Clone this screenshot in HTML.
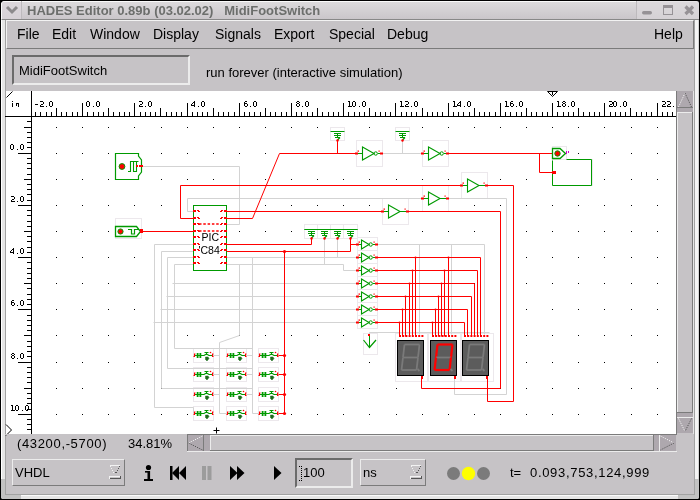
<!DOCTYPE html>
<html><head><meta charset="utf-8">
<style>
*{margin:0;padding:0;box-sizing:border-box}
html,body{width:700px;height:500px;overflow:hidden;background:#000;font-family:"Liberation Sans",sans-serif;-webkit-font-smoothing:antialiased}
#win{will-change:transform}
.a{position:absolute}
#win{position:absolute;left:0;top:0;width:700px;height:500px;background:#000;border-radius:5px 5px 5px 5px;overflow:hidden}
#frame{position:absolute;left:1px;top:1px;width:698px;height:498px;background:#e6e6e6;border-left:1px solid #fff;border-right:1px solid #d4d4d4;border-radius:4px 4px 4px 4px}
#content{position:absolute;left:5px;top:19px;width:690px;height:476px;background:#c6c3c6;border:1px solid #a2a2a2}
#title{position:absolute;left:1px;top:1px;width:698px;height:19px;background:linear-gradient(#dcdadc,#cac6ca);border-radius:4px 4px 0 0;border-bottom:1px solid #888;border-top:1px solid #fafafa;border-left:1px solid #fafafa}
#title .t{position:absolute;left:25px;top:1px;font-weight:bold;font-size:13px;color:#6c6e6c;white-space:pre}
#menubar{position:absolute;left:6px;top:20px;width:688px;height:29px;border-top:1px solid #f2f2f2;border-left:1px solid #f2f2f2;border-bottom:1px solid #7b7b7b;border-right:1px solid #7b7b7b;background:#c6c3c6}
.mi{position:absolute;top:5px;font-size:14px;color:#000}
#canvas{position:absolute;left:6px;top:91px;width:670px;height:343px;background:#fff;overflow:hidden}
.txt{font-size:13px;color:#000;position:absolute;white-space:pre}
svg{position:absolute;left:0;top:0}
svg text{font-family:"Liberation Sans",sans-serif}
</style></head><body>
<div id="win">
 <div id="frame"></div>
 <div class="a" style="left:695px;top:19px;width:3px;height:460px;background:#f4f4f4"></div>
 <div class="a" style="left:21px;top:495px;width:657px;height:1px;background:#fafafa"></div>
 <div class="a" style="left:1px;top:479px;width:4px;height:20px;background:#c2c2c2"></div>
 <div class="a" style="left:1px;top:495px;width:20px;height:4px;background:#c2c2c2;border-radius:0 0 0 4px"></div>
 <div class="a" style="left:695px;top:479px;width:4px;height:20px;background:#c2c2c2"></div>
 <div class="a" style="left:678px;top:495px;width:21px;height:4px;background:#c2c2c2;border-radius:0 0 4px 0"></div>
 <div id="content"></div>
 <div id="title"><div class="t">HADES Editor 0.89b (03.02.02)   MidiFootSwitch</div></div>
 <div id="menubar">
  <span class="mi" style="left:10px">File</span>
  <span class="mi" style="left:45px">Edit</span>
  <span class="mi" style="left:83px">Window</span>
  <span class="mi" style="left:146px">Display</span>
  <span class="mi" style="left:208px">Signals</span>
  <span class="mi" style="left:267px">Export</span>
  <span class="mi" style="left:322px">Special</span>
  <span class="mi" style="left:380px">Debug</span>
  <span class="mi" style="left:647px">Help</span>
 </div>
 <div class="a" style="left:12px;top:55px;width:178px;height:30px;border:2px solid;border-color:#6b6b6b #ececec #ececec #6b6b6b"></div>
 <div class="txt" style="left:19px;top:63px">MidiFootSwitch</div>
 <div class="txt" style="left:206px;top:65px">run forever (interactive simulation)</div>
 <div id="canvas"></div>
 <svg width="700" height="500" viewBox="0 0 700 500">
<rect x="5" y="116" width="672" height="1" fill="#000"/>
<rect x="31" y="91" width="1" height="343" fill="#000"/>
<path d="M6.5 97.5 L12.5 91.5" stroke="#000" stroke-width="1" fill="none"/>
<rect x="12" y="101" width="1" height="1" fill="#000"/>
<rect x="12" y="103" width="1" height="4" fill="#000"/>
<rect x="16" y="103" width="3" height="1" fill="#000"/>
<rect x="16" y="104" width="1" height="2" fill="#000"/>
<rect x="18" y="104" width="1" height="3" fill="#000"/>
<path d="M87 101h1v1h-1zM88 101h1v1h-1zM86 102h1v1h-1zM89 102h1v1h-1zM86 103h1v1h-1zM89 103h1v1h-1zM86 104h1v1h-1zM89 104h1v1h-1zM86 105h1v1h-1zM89 105h1v1h-1zM87 106h1v1h-1zM88 106h1v1h-1zM93 106h1v1h-1zM97 101h1v1h-1zM98 101h1v1h-1zM96 102h1v1h-1zM99 102h1v1h-1zM96 103h1v1h-1zM99 103h1v1h-1zM96 104h1v1h-1zM99 104h1v1h-1zM96 105h1v1h-1zM99 105h1v1h-1zM97 106h1v1h-1zM98 106h1v1h-1z" fill="#000"/>
<path d="M139 101h1v1h-1zM140 101h1v1h-1zM141 101h1v1h-1zM142 102h1v1h-1zM142 103h1v1h-1zM140 104h1v1h-1zM141 104h1v1h-1zM139 105h1v1h-1zM139 106h1v1h-1zM140 106h1v1h-1zM141 106h1v1h-1zM142 106h1v1h-1zM145 106h1v1h-1zM149 101h1v1h-1zM150 101h1v1h-1zM148 102h1v1h-1zM151 102h1v1h-1zM148 103h1v1h-1zM151 103h1v1h-1zM148 104h1v1h-1zM151 104h1v1h-1zM148 105h1v1h-1zM151 105h1v1h-1zM149 106h1v1h-1zM150 106h1v1h-1z" fill="#000"/>
<path d="M194 101h1v1h-1zM193 102h1v1h-1zM194 102h1v1h-1zM192 103h1v1h-1zM194 103h1v1h-1zM191 104h1v1h-1zM194 104h1v1h-1zM191 105h1v1h-1zM192 105h1v1h-1zM193 105h1v1h-1zM194 105h1v1h-1zM194 106h1v1h-1zM198 106h1v1h-1zM202 101h1v1h-1zM203 101h1v1h-1zM201 102h1v1h-1zM204 102h1v1h-1zM201 103h1v1h-1zM204 103h1v1h-1zM201 104h1v1h-1zM204 104h1v1h-1zM201 105h1v1h-1zM204 105h1v1h-1zM202 106h1v1h-1zM203 106h1v1h-1z" fill="#000"/>
<path d="M245 101h1v1h-1zM246 101h1v1h-1zM244 102h1v1h-1zM244 103h1v1h-1zM245 103h1v1h-1zM246 103h1v1h-1zM244 104h1v1h-1zM247 104h1v1h-1zM244 105h1v1h-1zM247 105h1v1h-1zM245 106h1v1h-1zM246 106h1v1h-1zM250 106h1v1h-1zM254 101h1v1h-1zM255 101h1v1h-1zM253 102h1v1h-1zM256 102h1v1h-1zM253 103h1v1h-1zM256 103h1v1h-1zM253 104h1v1h-1zM256 104h1v1h-1zM253 105h1v1h-1zM256 105h1v1h-1zM254 106h1v1h-1zM255 106h1v1h-1z" fill="#000"/>
<path d="M297 101h1v1h-1zM298 101h1v1h-1zM296 102h1v1h-1zM299 102h1v1h-1zM297 103h1v1h-1zM298 103h1v1h-1zM296 104h1v1h-1zM299 104h1v1h-1zM296 105h1v1h-1zM299 105h1v1h-1zM297 106h1v1h-1zM298 106h1v1h-1zM302 106h1v1h-1zM306 101h1v1h-1zM307 101h1v1h-1zM305 102h1v1h-1zM308 102h1v1h-1zM305 103h1v1h-1zM308 103h1v1h-1zM305 104h1v1h-1zM308 104h1v1h-1zM305 105h1v1h-1zM308 105h1v1h-1zM306 106h1v1h-1zM307 106h1v1h-1z" fill="#000"/>
<path d="M348 101h1v1h-1zM349 101h1v1h-1zM349 102h1v1h-1zM349 103h1v1h-1zM349 104h1v1h-1zM349 105h1v1h-1zM348 106h1v1h-1zM349 106h1v1h-1zM350 106h1v1h-1zM351 106h1v1h-1zM353 101h1v1h-1zM354 101h1v1h-1zM352 102h1v1h-1zM355 102h1v1h-1zM352 103h1v1h-1zM355 103h1v1h-1zM352 104h1v1h-1zM355 104h1v1h-1zM352 105h1v1h-1zM355 105h1v1h-1zM353 106h1v1h-1zM354 106h1v1h-1zM359 106h1v1h-1zM363 101h1v1h-1zM364 101h1v1h-1zM362 102h1v1h-1zM365 102h1v1h-1zM362 103h1v1h-1zM365 103h1v1h-1zM362 104h1v1h-1zM365 104h1v1h-1zM362 105h1v1h-1zM365 105h1v1h-1zM363 106h1v1h-1zM364 106h1v1h-1z" fill="#000"/>
<path d="M400 101h1v1h-1zM401 101h1v1h-1zM401 102h1v1h-1zM401 103h1v1h-1zM401 104h1v1h-1zM401 105h1v1h-1zM400 106h1v1h-1zM401 106h1v1h-1zM402 106h1v1h-1zM403 106h1v1h-1zM405 101h1v1h-1zM406 101h1v1h-1zM407 101h1v1h-1zM408 102h1v1h-1zM408 103h1v1h-1zM406 104h1v1h-1zM407 104h1v1h-1zM405 105h1v1h-1zM405 106h1v1h-1zM406 106h1v1h-1zM407 106h1v1h-1zM408 106h1v1h-1zM411 106h1v1h-1zM415 101h1v1h-1zM416 101h1v1h-1zM414 102h1v1h-1zM417 102h1v1h-1zM414 103h1v1h-1zM417 103h1v1h-1zM414 104h1v1h-1zM417 104h1v1h-1zM414 105h1v1h-1zM417 105h1v1h-1zM415 106h1v1h-1zM416 106h1v1h-1z" fill="#000"/>
<path d="M453 101h1v1h-1zM454 101h1v1h-1zM454 102h1v1h-1zM454 103h1v1h-1zM454 104h1v1h-1zM454 105h1v1h-1zM453 106h1v1h-1zM454 106h1v1h-1zM455 106h1v1h-1zM456 106h1v1h-1zM460 101h1v1h-1zM459 102h1v1h-1zM460 102h1v1h-1zM458 103h1v1h-1zM460 103h1v1h-1zM457 104h1v1h-1zM460 104h1v1h-1zM457 105h1v1h-1zM458 105h1v1h-1zM459 105h1v1h-1zM460 105h1v1h-1zM460 106h1v1h-1zM464 106h1v1h-1zM468 101h1v1h-1zM469 101h1v1h-1zM467 102h1v1h-1zM470 102h1v1h-1zM467 103h1v1h-1zM470 103h1v1h-1zM467 104h1v1h-1zM470 104h1v1h-1zM467 105h1v1h-1zM470 105h1v1h-1zM468 106h1v1h-1zM469 106h1v1h-1z" fill="#000"/>
<path d="M505 101h1v1h-1zM506 101h1v1h-1zM506 102h1v1h-1zM506 103h1v1h-1zM506 104h1v1h-1zM506 105h1v1h-1zM505 106h1v1h-1zM506 106h1v1h-1zM507 106h1v1h-1zM508 106h1v1h-1zM511 101h1v1h-1zM512 101h1v1h-1zM510 102h1v1h-1zM510 103h1v1h-1zM511 103h1v1h-1zM512 103h1v1h-1zM510 104h1v1h-1zM513 104h1v1h-1zM510 105h1v1h-1zM513 105h1v1h-1zM511 106h1v1h-1zM512 106h1v1h-1zM516 106h1v1h-1zM520 101h1v1h-1zM521 101h1v1h-1zM519 102h1v1h-1zM522 102h1v1h-1zM519 103h1v1h-1zM522 103h1v1h-1zM519 104h1v1h-1zM522 104h1v1h-1zM519 105h1v1h-1zM522 105h1v1h-1zM520 106h1v1h-1zM521 106h1v1h-1z" fill="#000"/>
<path d="M557 101h1v1h-1zM558 101h1v1h-1zM558 102h1v1h-1zM558 103h1v1h-1zM558 104h1v1h-1zM558 105h1v1h-1zM557 106h1v1h-1zM558 106h1v1h-1zM559 106h1v1h-1zM560 106h1v1h-1zM563 101h1v1h-1zM564 101h1v1h-1zM562 102h1v1h-1zM565 102h1v1h-1zM563 103h1v1h-1zM564 103h1v1h-1zM562 104h1v1h-1zM565 104h1v1h-1zM562 105h1v1h-1zM565 105h1v1h-1zM563 106h1v1h-1zM564 106h1v1h-1zM568 106h1v1h-1zM572 101h1v1h-1zM573 101h1v1h-1zM571 102h1v1h-1zM574 102h1v1h-1zM571 103h1v1h-1zM574 103h1v1h-1zM571 104h1v1h-1zM574 104h1v1h-1zM571 105h1v1h-1zM574 105h1v1h-1zM572 106h1v1h-1zM573 106h1v1h-1z" fill="#000"/>
<path d="M609 101h1v1h-1zM610 101h1v1h-1zM611 101h1v1h-1zM612 102h1v1h-1zM612 103h1v1h-1zM610 104h1v1h-1zM611 104h1v1h-1zM609 105h1v1h-1zM609 106h1v1h-1zM610 106h1v1h-1zM611 106h1v1h-1zM612 106h1v1h-1zM614 101h1v1h-1zM615 101h1v1h-1zM613 102h1v1h-1zM616 102h1v1h-1zM613 103h1v1h-1zM616 103h1v1h-1zM613 104h1v1h-1zM616 104h1v1h-1zM613 105h1v1h-1zM616 105h1v1h-1zM614 106h1v1h-1zM615 106h1v1h-1zM620 106h1v1h-1zM624 101h1v1h-1zM625 101h1v1h-1zM623 102h1v1h-1zM626 102h1v1h-1zM623 103h1v1h-1zM626 103h1v1h-1zM623 104h1v1h-1zM626 104h1v1h-1zM623 105h1v1h-1zM626 105h1v1h-1zM624 106h1v1h-1zM625 106h1v1h-1z" fill="#000"/>
<path d="M662 101h1v1h-1zM663 101h1v1h-1zM664 101h1v1h-1zM665 102h1v1h-1zM665 103h1v1h-1zM663 104h1v1h-1zM664 104h1v1h-1zM662 105h1v1h-1zM662 106h1v1h-1zM663 106h1v1h-1zM664 106h1v1h-1zM665 106h1v1h-1zM667 101h1v1h-1zM668 101h1v1h-1zM669 101h1v1h-1zM670 102h1v1h-1zM670 103h1v1h-1zM668 104h1v1h-1zM669 104h1v1h-1zM667 105h1v1h-1zM667 106h1v1h-1zM668 106h1v1h-1zM669 106h1v1h-1zM670 106h1v1h-1zM673 106h1v1h-1zM677 101h1v1h-1zM678 101h1v1h-1zM676 102h1v1h-1zM679 102h1v1h-1zM676 103h1v1h-1zM679 103h1v1h-1zM676 104h1v1h-1zM679 104h1v1h-1zM676 105h1v1h-1zM679 105h1v1h-1zM677 106h1v1h-1zM678 106h1v1h-1z" fill="#000"/>
<path d="M35 104h1v1h-1zM36 104h1v1h-1zM37 104h1v1h-1zM40 101h1v1h-1zM41 101h1v1h-1zM42 101h1v1h-1zM43 102h1v1h-1zM43 103h1v1h-1zM41 104h1v1h-1zM42 104h1v1h-1zM40 105h1v1h-1zM40 106h1v1h-1zM41 106h1v1h-1zM42 106h1v1h-1zM43 106h1v1h-1zM46 106h1v1h-1zM50 101h1v1h-1zM51 101h1v1h-1zM49 102h1v1h-1zM52 102h1v1h-1zM49 103h1v1h-1zM52 103h1v1h-1zM49 104h1v1h-1zM52 104h1v1h-1zM49 105h1v1h-1zM52 105h1v1h-1zM50 106h1v1h-1zM51 106h1v1h-1z" fill="#000"/>
<path d="M11 144h1v1h-1zM12 144h1v1h-1zM10 145h1v1h-1zM13 145h1v1h-1zM10 146h1v1h-1zM13 146h1v1h-1zM10 147h1v1h-1zM13 147h1v1h-1zM10 148h1v1h-1zM13 148h1v1h-1zM11 149h1v1h-1zM12 149h1v1h-1zM17 149h1v1h-1zM21 144h1v1h-1zM22 144h1v1h-1zM20 145h1v1h-1zM23 145h1v1h-1zM20 146h1v1h-1zM23 146h1v1h-1zM20 147h1v1h-1zM23 147h1v1h-1zM20 148h1v1h-1zM23 148h1v1h-1zM21 149h1v1h-1zM22 149h1v1h-1z" fill="#000"/>
<path d="M11 196h1v1h-1zM12 196h1v1h-1zM13 196h1v1h-1zM14 197h1v1h-1zM14 198h1v1h-1zM12 199h1v1h-1zM13 199h1v1h-1zM11 200h1v1h-1zM11 201h1v1h-1zM12 201h1v1h-1zM13 201h1v1h-1zM14 201h1v1h-1zM17 201h1v1h-1zM21 196h1v1h-1zM22 196h1v1h-1zM20 197h1v1h-1zM23 197h1v1h-1zM20 198h1v1h-1zM23 198h1v1h-1zM20 199h1v1h-1zM23 199h1v1h-1zM20 200h1v1h-1zM23 200h1v1h-1zM21 201h1v1h-1zM22 201h1v1h-1z" fill="#000"/>
<path d="M13 248h1v1h-1zM12 249h1v1h-1zM13 249h1v1h-1zM11 250h1v1h-1zM13 250h1v1h-1zM10 251h1v1h-1zM13 251h1v1h-1zM10 252h1v1h-1zM11 252h1v1h-1zM12 252h1v1h-1zM13 252h1v1h-1zM13 253h1v1h-1zM17 253h1v1h-1zM21 248h1v1h-1zM22 248h1v1h-1zM20 249h1v1h-1zM23 249h1v1h-1zM20 250h1v1h-1zM23 250h1v1h-1zM20 251h1v1h-1zM23 251h1v1h-1zM20 252h1v1h-1zM23 252h1v1h-1zM21 253h1v1h-1zM22 253h1v1h-1z" fill="#000"/>
<path d="M12 300h1v1h-1zM13 300h1v1h-1zM11 301h1v1h-1zM11 302h1v1h-1zM12 302h1v1h-1zM13 302h1v1h-1zM11 303h1v1h-1zM14 303h1v1h-1zM11 304h1v1h-1zM14 304h1v1h-1zM12 305h1v1h-1zM13 305h1v1h-1zM17 305h1v1h-1zM21 300h1v1h-1zM22 300h1v1h-1zM20 301h1v1h-1zM23 301h1v1h-1zM20 302h1v1h-1zM23 302h1v1h-1zM20 303h1v1h-1zM23 303h1v1h-1zM20 304h1v1h-1zM23 304h1v1h-1zM21 305h1v1h-1zM22 305h1v1h-1z" fill="#000"/>
<path d="M12 353h1v1h-1zM13 353h1v1h-1zM11 354h1v1h-1zM14 354h1v1h-1zM12 355h1v1h-1zM13 355h1v1h-1zM11 356h1v1h-1zM14 356h1v1h-1zM11 357h1v1h-1zM14 357h1v1h-1zM12 358h1v1h-1zM13 358h1v1h-1zM17 358h1v1h-1zM21 353h1v1h-1zM22 353h1v1h-1zM20 354h1v1h-1zM23 354h1v1h-1zM20 355h1v1h-1zM23 355h1v1h-1zM20 356h1v1h-1zM23 356h1v1h-1zM20 357h1v1h-1zM23 357h1v1h-1zM21 358h1v1h-1zM22 358h1v1h-1z" fill="#000"/>
<path d="M11 405h1v1h-1zM12 405h1v1h-1zM12 406h1v1h-1zM12 407h1v1h-1zM12 408h1v1h-1zM12 409h1v1h-1zM11 410h1v1h-1zM12 410h1v1h-1zM13 410h1v1h-1zM14 410h1v1h-1zM16 405h1v1h-1zM17 405h1v1h-1zM15 406h1v1h-1zM18 406h1v1h-1zM15 407h1v1h-1zM18 407h1v1h-1zM15 408h1v1h-1zM18 408h1v1h-1zM15 409h1v1h-1zM18 409h1v1h-1zM16 410h1v1h-1zM17 410h1v1h-1zM22 410h1v1h-1zM26 405h1v1h-1zM27 405h1v1h-1zM25 406h1v1h-1zM28 406h1v1h-1zM25 407h1v1h-1zM28 407h1v1h-1zM25 408h1v1h-1zM28 408h1v1h-1zM25 409h1v1h-1zM28 409h1v1h-1zM26 410h1v1h-1zM27 410h1v1h-1z" fill="#000"/>
<path d="M35 112h1v4h-1zM40 112h1v4h-1zM46 112h1v4h-1zM51 112h1v4h-1zM56 108h1v8h-1zM61 112h1v4h-1zM66 112h1v4h-1zM72 112h1v4h-1zM77 112h1v4h-1zM82 103h1v13h-1zM87 112h1v4h-1zM93 112h1v4h-1zM98 112h1v4h-1zM103 112h1v4h-1zM108 108h1v8h-1zM113 112h1v4h-1zM119 112h1v4h-1zM124 112h1v4h-1zM129 112h1v4h-1zM134 103h1v13h-1zM140 112h1v4h-1zM145 112h1v4h-1zM150 112h1v4h-1zM155 112h1v4h-1zM160 108h1v8h-1zM166 112h1v4h-1zM171 112h1v4h-1zM176 112h1v4h-1zM181 112h1v4h-1zM187 103h1v13h-1zM192 112h1v4h-1zM197 112h1v4h-1zM202 112h1v4h-1zM207 112h1v4h-1zM213 108h1v8h-1zM218 112h1v4h-1zM223 112h1v4h-1zM228 112h1v4h-1zM234 112h1v4h-1zM239 103h1v13h-1zM244 112h1v4h-1zM249 112h1v4h-1zM254 112h1v4h-1zM260 112h1v4h-1zM265 108h1v8h-1zM270 112h1v4h-1zM275 112h1v4h-1zM281 112h1v4h-1zM286 112h1v4h-1zM291 103h1v13h-1zM296 112h1v4h-1zM301 112h1v4h-1zM307 112h1v4h-1zM312 112h1v4h-1zM317 108h1v8h-1zM322 112h1v4h-1zM328 112h1v4h-1zM333 112h1v4h-1zM338 112h1v4h-1zM343 103h1v13h-1zM348 112h1v4h-1zM354 112h1v4h-1zM359 112h1v4h-1zM364 112h1v4h-1zM369 108h1v8h-1zM375 112h1v4h-1zM380 112h1v4h-1zM385 112h1v4h-1zM390 112h1v4h-1zM395 103h1v13h-1zM401 112h1v4h-1zM406 112h1v4h-1zM411 112h1v4h-1zM416 112h1v4h-1zM422 108h1v8h-1zM427 112h1v4h-1zM432 112h1v4h-1zM437 112h1v4h-1zM442 112h1v4h-1zM448 103h1v13h-1zM453 112h1v4h-1zM458 112h1v4h-1zM463 112h1v4h-1zM469 112h1v4h-1zM474 108h1v8h-1zM479 112h1v4h-1zM484 112h1v4h-1zM489 112h1v4h-1zM495 112h1v4h-1zM500 103h1v13h-1zM505 112h1v4h-1zM510 112h1v4h-1zM516 112h1v4h-1zM521 112h1v4h-1zM526 108h1v8h-1zM531 112h1v4h-1zM536 112h1v4h-1zM542 112h1v4h-1zM547 112h1v4h-1zM552 103h1v13h-1zM557 112h1v4h-1zM563 112h1v4h-1zM568 112h1v4h-1zM573 112h1v4h-1zM578 108h1v8h-1zM583 112h1v4h-1zM589 112h1v4h-1zM594 112h1v4h-1zM599 112h1v4h-1zM604 103h1v13h-1zM610 112h1v4h-1zM615 112h1v4h-1zM620 112h1v4h-1zM625 112h1v4h-1zM630 108h1v8h-1zM636 112h1v4h-1zM641 112h1v4h-1zM646 112h1v4h-1zM651 112h1v4h-1zM657 103h1v13h-1zM662 112h1v4h-1zM667 112h1v4h-1zM672 112h1v4h-1zM27 121h4v1h-4zM24 127h7v1h-7zM27 132h4v1h-4zM27 137h4v1h-4zM27 142h4v1h-4zM27 147h4v1h-4zM18 153h13v1h-13zM27 158h4v1h-4zM27 163h4v1h-4zM27 168h4v1h-4zM27 174h4v1h-4zM24 179h7v1h-7zM27 184h4v1h-4zM27 189h4v1h-4zM27 194h4v1h-4zM27 200h4v1h-4zM18 205h13v1h-13zM27 210h4v1h-4zM27 215h4v1h-4zM27 221h4v1h-4zM27 226h4v1h-4zM24 231h7v1h-7zM27 236h4v1h-4zM27 241h4v1h-4zM27 247h4v1h-4zM27 252h4v1h-4zM18 257h13v1h-13zM27 262h4v1h-4zM27 268h4v1h-4zM27 273h4v1h-4zM27 278h4v1h-4zM24 283h7v1h-7zM27 288h4v1h-4zM27 294h4v1h-4zM27 299h4v1h-4zM27 304h4v1h-4zM18 309h13v1h-13zM27 315h4v1h-4zM27 320h4v1h-4zM27 325h4v1h-4zM27 330h4v1h-4zM24 335h7v1h-7zM27 341h4v1h-4zM27 346h4v1h-4zM27 351h4v1h-4zM27 356h4v1h-4zM18 362h13v1h-13zM27 367h4v1h-4zM27 372h4v1h-4zM27 377h4v1h-4zM27 382h4v1h-4zM24 388h7v1h-7zM27 393h4v1h-4zM27 398h4v1h-4zM27 403h4v1h-4zM27 409h4v1h-4zM18 414h13v1h-13zM27 419h4v1h-4zM27 424h4v1h-4zM27 429h4v1h-4z" fill="#000"/>
<path d="M6 424.5 L11.5 430 L6 435.5" stroke="#000" stroke-width="1" fill="none"/>
<path d="M547.5 91.5 H557.5 L552.5 96.5 Z M552.5 91.5 V95" stroke="#000" stroke-width="1" fill="none"/>
<rect x="56" y="127" width="1" height="1" fill="#000"/>
<rect x="56" y="153" width="1" height="1" fill="#000"/>
<rect x="56" y="179" width="1" height="1" fill="#000"/>
<rect x="56" y="205" width="1" height="1" fill="#000"/>
<rect x="56" y="231" width="1" height="1" fill="#000"/>
<rect x="56" y="257" width="1" height="1" fill="#000"/>
<rect x="56" y="283" width="1" height="1" fill="#000"/>
<rect x="56" y="309" width="1" height="1" fill="#000"/>
<rect x="56" y="335" width="1" height="1" fill="#000"/>
<rect x="56" y="362" width="1" height="1" fill="#000"/>
<rect x="56" y="388" width="1" height="1" fill="#000"/>
<rect x="56" y="414" width="1" height="1" fill="#000"/>
<rect x="82" y="127" width="1" height="1" fill="#000"/>
<rect x="82" y="153" width="1" height="1" fill="#000"/>
<rect x="82" y="179" width="1" height="1" fill="#000"/>
<rect x="82" y="205" width="1" height="1" fill="#000"/>
<rect x="82" y="231" width="1" height="1" fill="#000"/>
<rect x="82" y="257" width="1" height="1" fill="#000"/>
<rect x="82" y="283" width="1" height="1" fill="#000"/>
<rect x="82" y="309" width="1" height="1" fill="#000"/>
<rect x="82" y="335" width="1" height="1" fill="#000"/>
<rect x="82" y="362" width="1" height="1" fill="#000"/>
<rect x="82" y="388" width="1" height="1" fill="#000"/>
<rect x="82" y="414" width="1" height="1" fill="#000"/>
<rect x="108" y="127" width="1" height="1" fill="#000"/>
<rect x="108" y="153" width="1" height="1" fill="#000"/>
<rect x="108" y="179" width="1" height="1" fill="#000"/>
<rect x="108" y="205" width="1" height="1" fill="#000"/>
<rect x="108" y="231" width="1" height="1" fill="#000"/>
<rect x="108" y="257" width="1" height="1" fill="#000"/>
<rect x="108" y="283" width="1" height="1" fill="#000"/>
<rect x="108" y="309" width="1" height="1" fill="#000"/>
<rect x="108" y="335" width="1" height="1" fill="#000"/>
<rect x="108" y="362" width="1" height="1" fill="#000"/>
<rect x="108" y="388" width="1" height="1" fill="#000"/>
<rect x="108" y="414" width="1" height="1" fill="#000"/>
<rect x="134" y="127" width="1" height="1" fill="#000"/>
<rect x="134" y="153" width="1" height="1" fill="#000"/>
<rect x="134" y="179" width="1" height="1" fill="#000"/>
<rect x="134" y="205" width="1" height="1" fill="#000"/>
<rect x="134" y="231" width="1" height="1" fill="#000"/>
<rect x="134" y="257" width="1" height="1" fill="#000"/>
<rect x="134" y="283" width="1" height="1" fill="#000"/>
<rect x="134" y="309" width="1" height="1" fill="#000"/>
<rect x="134" y="335" width="1" height="1" fill="#000"/>
<rect x="134" y="362" width="1" height="1" fill="#000"/>
<rect x="134" y="388" width="1" height="1" fill="#000"/>
<rect x="134" y="414" width="1" height="1" fill="#000"/>
<rect x="161" y="127" width="1" height="1" fill="#000"/>
<rect x="161" y="153" width="1" height="1" fill="#000"/>
<rect x="161" y="179" width="1" height="1" fill="#000"/>
<rect x="161" y="205" width="1" height="1" fill="#000"/>
<rect x="161" y="231" width="1" height="1" fill="#000"/>
<rect x="161" y="257" width="1" height="1" fill="#000"/>
<rect x="161" y="283" width="1" height="1" fill="#000"/>
<rect x="161" y="309" width="1" height="1" fill="#000"/>
<rect x="161" y="335" width="1" height="1" fill="#000"/>
<rect x="161" y="362" width="1" height="1" fill="#000"/>
<rect x="161" y="388" width="1" height="1" fill="#000"/>
<rect x="161" y="414" width="1" height="1" fill="#000"/>
<rect x="187" y="127" width="1" height="1" fill="#000"/>
<rect x="187" y="153" width="1" height="1" fill="#000"/>
<rect x="187" y="179" width="1" height="1" fill="#000"/>
<rect x="187" y="205" width="1" height="1" fill="#000"/>
<rect x="187" y="231" width="1" height="1" fill="#000"/>
<rect x="187" y="257" width="1" height="1" fill="#000"/>
<rect x="187" y="283" width="1" height="1" fill="#000"/>
<rect x="187" y="309" width="1" height="1" fill="#000"/>
<rect x="187" y="335" width="1" height="1" fill="#000"/>
<rect x="187" y="362" width="1" height="1" fill="#000"/>
<rect x="187" y="388" width="1" height="1" fill="#000"/>
<rect x="187" y="414" width="1" height="1" fill="#000"/>
<rect x="213" y="127" width="1" height="1" fill="#000"/>
<rect x="213" y="153" width="1" height="1" fill="#000"/>
<rect x="213" y="179" width="1" height="1" fill="#000"/>
<rect x="213" y="205" width="1" height="1" fill="#000"/>
<rect x="213" y="231" width="1" height="1" fill="#000"/>
<rect x="213" y="257" width="1" height="1" fill="#000"/>
<rect x="213" y="283" width="1" height="1" fill="#000"/>
<rect x="213" y="309" width="1" height="1" fill="#000"/>
<rect x="213" y="335" width="1" height="1" fill="#000"/>
<rect x="213" y="362" width="1" height="1" fill="#000"/>
<rect x="213" y="388" width="1" height="1" fill="#000"/>
<rect x="213" y="414" width="1" height="1" fill="#000"/>
<rect x="239" y="127" width="1" height="1" fill="#000"/>
<rect x="239" y="153" width="1" height="1" fill="#000"/>
<rect x="239" y="179" width="1" height="1" fill="#000"/>
<rect x="239" y="205" width="1" height="1" fill="#000"/>
<rect x="239" y="231" width="1" height="1" fill="#000"/>
<rect x="239" y="257" width="1" height="1" fill="#000"/>
<rect x="239" y="283" width="1" height="1" fill="#000"/>
<rect x="239" y="309" width="1" height="1" fill="#000"/>
<rect x="239" y="335" width="1" height="1" fill="#000"/>
<rect x="239" y="362" width="1" height="1" fill="#000"/>
<rect x="239" y="388" width="1" height="1" fill="#000"/>
<rect x="239" y="414" width="1" height="1" fill="#000"/>
<rect x="265" y="127" width="1" height="1" fill="#000"/>
<rect x="265" y="153" width="1" height="1" fill="#000"/>
<rect x="265" y="179" width="1" height="1" fill="#000"/>
<rect x="265" y="205" width="1" height="1" fill="#000"/>
<rect x="265" y="231" width="1" height="1" fill="#000"/>
<rect x="265" y="257" width="1" height="1" fill="#000"/>
<rect x="265" y="283" width="1" height="1" fill="#000"/>
<rect x="265" y="309" width="1" height="1" fill="#000"/>
<rect x="265" y="335" width="1" height="1" fill="#000"/>
<rect x="265" y="362" width="1" height="1" fill="#000"/>
<rect x="265" y="388" width="1" height="1" fill="#000"/>
<rect x="265" y="414" width="1" height="1" fill="#000"/>
<rect x="291" y="127" width="1" height="1" fill="#000"/>
<rect x="291" y="153" width="1" height="1" fill="#000"/>
<rect x="291" y="179" width="1" height="1" fill="#000"/>
<rect x="291" y="205" width="1" height="1" fill="#000"/>
<rect x="291" y="231" width="1" height="1" fill="#000"/>
<rect x="291" y="257" width="1" height="1" fill="#000"/>
<rect x="291" y="283" width="1" height="1" fill="#000"/>
<rect x="291" y="309" width="1" height="1" fill="#000"/>
<rect x="291" y="335" width="1" height="1" fill="#000"/>
<rect x="291" y="362" width="1" height="1" fill="#000"/>
<rect x="291" y="388" width="1" height="1" fill="#000"/>
<rect x="291" y="414" width="1" height="1" fill="#000"/>
<rect x="317" y="127" width="1" height="1" fill="#000"/>
<rect x="317" y="153" width="1" height="1" fill="#000"/>
<rect x="317" y="179" width="1" height="1" fill="#000"/>
<rect x="317" y="205" width="1" height="1" fill="#000"/>
<rect x="317" y="231" width="1" height="1" fill="#000"/>
<rect x="317" y="257" width="1" height="1" fill="#000"/>
<rect x="317" y="283" width="1" height="1" fill="#000"/>
<rect x="317" y="309" width="1" height="1" fill="#000"/>
<rect x="317" y="335" width="1" height="1" fill="#000"/>
<rect x="317" y="362" width="1" height="1" fill="#000"/>
<rect x="317" y="388" width="1" height="1" fill="#000"/>
<rect x="317" y="414" width="1" height="1" fill="#000"/>
<rect x="343" y="127" width="1" height="1" fill="#000"/>
<rect x="343" y="153" width="1" height="1" fill="#000"/>
<rect x="343" y="179" width="1" height="1" fill="#000"/>
<rect x="343" y="205" width="1" height="1" fill="#000"/>
<rect x="343" y="231" width="1" height="1" fill="#000"/>
<rect x="343" y="257" width="1" height="1" fill="#000"/>
<rect x="343" y="283" width="1" height="1" fill="#000"/>
<rect x="343" y="309" width="1" height="1" fill="#000"/>
<rect x="343" y="335" width="1" height="1" fill="#000"/>
<rect x="343" y="362" width="1" height="1" fill="#000"/>
<rect x="343" y="388" width="1" height="1" fill="#000"/>
<rect x="343" y="414" width="1" height="1" fill="#000"/>
<rect x="369" y="127" width="1" height="1" fill="#000"/>
<rect x="369" y="153" width="1" height="1" fill="#000"/>
<rect x="369" y="179" width="1" height="1" fill="#000"/>
<rect x="369" y="205" width="1" height="1" fill="#000"/>
<rect x="369" y="231" width="1" height="1" fill="#000"/>
<rect x="369" y="257" width="1" height="1" fill="#000"/>
<rect x="369" y="283" width="1" height="1" fill="#000"/>
<rect x="369" y="309" width="1" height="1" fill="#000"/>
<rect x="369" y="335" width="1" height="1" fill="#000"/>
<rect x="369" y="362" width="1" height="1" fill="#000"/>
<rect x="369" y="388" width="1" height="1" fill="#000"/>
<rect x="369" y="414" width="1" height="1" fill="#000"/>
<rect x="396" y="127" width="1" height="1" fill="#000"/>
<rect x="396" y="153" width="1" height="1" fill="#000"/>
<rect x="396" y="179" width="1" height="1" fill="#000"/>
<rect x="396" y="205" width="1" height="1" fill="#000"/>
<rect x="396" y="231" width="1" height="1" fill="#000"/>
<rect x="396" y="257" width="1" height="1" fill="#000"/>
<rect x="396" y="283" width="1" height="1" fill="#000"/>
<rect x="396" y="309" width="1" height="1" fill="#000"/>
<rect x="396" y="335" width="1" height="1" fill="#000"/>
<rect x="396" y="362" width="1" height="1" fill="#000"/>
<rect x="396" y="388" width="1" height="1" fill="#000"/>
<rect x="396" y="414" width="1" height="1" fill="#000"/>
<rect x="422" y="127" width="1" height="1" fill="#000"/>
<rect x="422" y="153" width="1" height="1" fill="#000"/>
<rect x="422" y="179" width="1" height="1" fill="#000"/>
<rect x="422" y="205" width="1" height="1" fill="#000"/>
<rect x="422" y="231" width="1" height="1" fill="#000"/>
<rect x="422" y="257" width="1" height="1" fill="#000"/>
<rect x="422" y="283" width="1" height="1" fill="#000"/>
<rect x="422" y="309" width="1" height="1" fill="#000"/>
<rect x="422" y="335" width="1" height="1" fill="#000"/>
<rect x="422" y="362" width="1" height="1" fill="#000"/>
<rect x="422" y="388" width="1" height="1" fill="#000"/>
<rect x="422" y="414" width="1" height="1" fill="#000"/>
<rect x="448" y="127" width="1" height="1" fill="#000"/>
<rect x="448" y="153" width="1" height="1" fill="#000"/>
<rect x="448" y="179" width="1" height="1" fill="#000"/>
<rect x="448" y="205" width="1" height="1" fill="#000"/>
<rect x="448" y="231" width="1" height="1" fill="#000"/>
<rect x="448" y="257" width="1" height="1" fill="#000"/>
<rect x="448" y="283" width="1" height="1" fill="#000"/>
<rect x="448" y="309" width="1" height="1" fill="#000"/>
<rect x="448" y="335" width="1" height="1" fill="#000"/>
<rect x="448" y="362" width="1" height="1" fill="#000"/>
<rect x="448" y="388" width="1" height="1" fill="#000"/>
<rect x="448" y="414" width="1" height="1" fill="#000"/>
<rect x="474" y="127" width="1" height="1" fill="#000"/>
<rect x="474" y="153" width="1" height="1" fill="#000"/>
<rect x="474" y="179" width="1" height="1" fill="#000"/>
<rect x="474" y="205" width="1" height="1" fill="#000"/>
<rect x="474" y="231" width="1" height="1" fill="#000"/>
<rect x="474" y="257" width="1" height="1" fill="#000"/>
<rect x="474" y="283" width="1" height="1" fill="#000"/>
<rect x="474" y="309" width="1" height="1" fill="#000"/>
<rect x="474" y="335" width="1" height="1" fill="#000"/>
<rect x="474" y="362" width="1" height="1" fill="#000"/>
<rect x="474" y="388" width="1" height="1" fill="#000"/>
<rect x="474" y="414" width="1" height="1" fill="#000"/>
<rect x="500" y="127" width="1" height="1" fill="#000"/>
<rect x="500" y="153" width="1" height="1" fill="#000"/>
<rect x="500" y="179" width="1" height="1" fill="#000"/>
<rect x="500" y="205" width="1" height="1" fill="#000"/>
<rect x="500" y="231" width="1" height="1" fill="#000"/>
<rect x="500" y="257" width="1" height="1" fill="#000"/>
<rect x="500" y="283" width="1" height="1" fill="#000"/>
<rect x="500" y="309" width="1" height="1" fill="#000"/>
<rect x="500" y="335" width="1" height="1" fill="#000"/>
<rect x="500" y="362" width="1" height="1" fill="#000"/>
<rect x="500" y="388" width="1" height="1" fill="#000"/>
<rect x="500" y="414" width="1" height="1" fill="#000"/>
<rect x="526" y="127" width="1" height="1" fill="#000"/>
<rect x="526" y="153" width="1" height="1" fill="#000"/>
<rect x="526" y="179" width="1" height="1" fill="#000"/>
<rect x="526" y="205" width="1" height="1" fill="#000"/>
<rect x="526" y="231" width="1" height="1" fill="#000"/>
<rect x="526" y="257" width="1" height="1" fill="#000"/>
<rect x="526" y="283" width="1" height="1" fill="#000"/>
<rect x="526" y="309" width="1" height="1" fill="#000"/>
<rect x="526" y="335" width="1" height="1" fill="#000"/>
<rect x="526" y="362" width="1" height="1" fill="#000"/>
<rect x="526" y="388" width="1" height="1" fill="#000"/>
<rect x="526" y="414" width="1" height="1" fill="#000"/>
<rect x="552" y="127" width="1" height="1" fill="#000"/>
<rect x="552" y="153" width="1" height="1" fill="#000"/>
<rect x="552" y="179" width="1" height="1" fill="#000"/>
<rect x="552" y="205" width="1" height="1" fill="#000"/>
<rect x="552" y="231" width="1" height="1" fill="#000"/>
<rect x="552" y="257" width="1" height="1" fill="#000"/>
<rect x="552" y="283" width="1" height="1" fill="#000"/>
<rect x="552" y="309" width="1" height="1" fill="#000"/>
<rect x="552" y="335" width="1" height="1" fill="#000"/>
<rect x="552" y="362" width="1" height="1" fill="#000"/>
<rect x="552" y="388" width="1" height="1" fill="#000"/>
<rect x="552" y="414" width="1" height="1" fill="#000"/>
<rect x="578" y="127" width="1" height="1" fill="#000"/>
<rect x="578" y="153" width="1" height="1" fill="#000"/>
<rect x="578" y="179" width="1" height="1" fill="#000"/>
<rect x="578" y="205" width="1" height="1" fill="#000"/>
<rect x="578" y="231" width="1" height="1" fill="#000"/>
<rect x="578" y="257" width="1" height="1" fill="#000"/>
<rect x="578" y="283" width="1" height="1" fill="#000"/>
<rect x="578" y="309" width="1" height="1" fill="#000"/>
<rect x="578" y="335" width="1" height="1" fill="#000"/>
<rect x="578" y="362" width="1" height="1" fill="#000"/>
<rect x="578" y="388" width="1" height="1" fill="#000"/>
<rect x="578" y="414" width="1" height="1" fill="#000"/>
<rect x="604" y="127" width="1" height="1" fill="#000"/>
<rect x="604" y="153" width="1" height="1" fill="#000"/>
<rect x="604" y="179" width="1" height="1" fill="#000"/>
<rect x="604" y="205" width="1" height="1" fill="#000"/>
<rect x="604" y="231" width="1" height="1" fill="#000"/>
<rect x="604" y="257" width="1" height="1" fill="#000"/>
<rect x="604" y="283" width="1" height="1" fill="#000"/>
<rect x="604" y="309" width="1" height="1" fill="#000"/>
<rect x="604" y="335" width="1" height="1" fill="#000"/>
<rect x="604" y="362" width="1" height="1" fill="#000"/>
<rect x="604" y="388" width="1" height="1" fill="#000"/>
<rect x="604" y="414" width="1" height="1" fill="#000"/>
<rect x="631" y="127" width="1" height="1" fill="#000"/>
<rect x="631" y="153" width="1" height="1" fill="#000"/>
<rect x="631" y="179" width="1" height="1" fill="#000"/>
<rect x="631" y="205" width="1" height="1" fill="#000"/>
<rect x="631" y="231" width="1" height="1" fill="#000"/>
<rect x="631" y="257" width="1" height="1" fill="#000"/>
<rect x="631" y="283" width="1" height="1" fill="#000"/>
<rect x="631" y="309" width="1" height="1" fill="#000"/>
<rect x="631" y="335" width="1" height="1" fill="#000"/>
<rect x="631" y="362" width="1" height="1" fill="#000"/>
<rect x="631" y="388" width="1" height="1" fill="#000"/>
<rect x="631" y="414" width="1" height="1" fill="#000"/>
<rect x="657" y="127" width="1" height="1" fill="#000"/>
<rect x="657" y="153" width="1" height="1" fill="#000"/>
<rect x="657" y="179" width="1" height="1" fill="#000"/>
<rect x="657" y="205" width="1" height="1" fill="#000"/>
<rect x="657" y="231" width="1" height="1" fill="#000"/>
<rect x="657" y="257" width="1" height="1" fill="#000"/>
<rect x="657" y="283" width="1" height="1" fill="#000"/>
<rect x="657" y="309" width="1" height="1" fill="#000"/>
<rect x="657" y="335" width="1" height="1" fill="#000"/>
<rect x="657" y="362" width="1" height="1" fill="#000"/>
<rect x="657" y="388" width="1" height="1" fill="#000"/>
<rect x="657" y="414" width="1" height="1" fill="#000"/>
<rect x="115.5" y="218.5" width="26" height="20" stroke="#ece8ec" fill="#fff" stroke-width="1"/>
<rect x="356.5" y="140.5" width="26" height="26" stroke="#ece8ec" fill="#fff" stroke-width="1"/>
<rect x="422.5" y="140.5" width="26" height="26" stroke="#ece8ec" fill="#fff" stroke-width="1"/>
<rect x="382.5" y="198.5" width="26" height="26" stroke="#ece8ec" fill="#fff" stroke-width="1"/>
<rect x="461.5" y="172.5" width="26" height="26" stroke="#ece8ec" fill="#fff" stroke-width="1"/>
<rect x="422.5" y="185.5" width="26" height="26" stroke="#ece8ec" fill="#fff" stroke-width="1"/>
<rect x="330.5" y="127.5" width="14" height="13" stroke="#ece8ec" fill="#fff" stroke-width="1"/>
<rect x="395.5" y="127.5" width="14" height="13" stroke="#ece8ec" fill="#fff" stroke-width="1"/>
<rect x="304.5" y="224.5" width="13" height="14" stroke="#ece8ec" fill="#fff" stroke-width="1"/>
<rect x="317.5" y="224.5" width="13" height="14" stroke="#ece8ec" fill="#fff" stroke-width="1"/>
<rect x="330.5" y="224.5" width="13" height="14" stroke="#ece8ec" fill="#fff" stroke-width="1"/>
<rect x="343.5" y="224.5" width="14" height="14" stroke="#ece8ec" fill="#fff" stroke-width="1"/>
<rect x="395.5" y="333.5" width="32" height="48" stroke="#ece8ec" fill="#fff" stroke-width="1"/>
<rect x="428.5" y="333.5" width="32" height="48" stroke="#ece8ec" fill="#fff" stroke-width="1"/>
<rect x="461.5" y="333.5" width="32" height="48" stroke="#ece8ec" fill="#fff" stroke-width="1"/>
<rect x="363.5" y="333.5" width="14" height="21" stroke="#ece8ec" fill="#fff" stroke-width="1"/>
<rect x="552.5" y="146.5" width="14" height="14" stroke="#ece8ec" fill="#fff" stroke-width="1"/>
<rect x="357.5" y="237.5" width="20" height="13" stroke="#ece8ec" fill="#fff" stroke-width="1"/>
<rect x="357.5" y="250.5" width="20" height="13" stroke="#ece8ec" fill="#fff" stroke-width="1"/>
<rect x="357.5" y="263.5" width="20" height="13" stroke="#ece8ec" fill="#fff" stroke-width="1"/>
<rect x="357.5" y="276.5" width="20" height="13" stroke="#ece8ec" fill="#fff" stroke-width="1"/>
<rect x="357.5" y="289.5" width="20" height="13" stroke="#ece8ec" fill="#fff" stroke-width="1"/>
<rect x="357.5" y="302.5" width="20" height="13" stroke="#ece8ec" fill="#fff" stroke-width="1"/>
<rect x="357.5" y="315.5" width="20" height="13" stroke="#ece8ec" fill="#fff" stroke-width="1"/>
<rect x="193.5" y="348.5" width="20" height="14" stroke="#ece8ec" fill="#fff" stroke-width="1"/>
<rect x="226.5" y="348.5" width="20" height="14" stroke="#ece8ec" fill="#fff" stroke-width="1"/>
<rect x="258.5" y="348.5" width="20" height="14" stroke="#ece8ec" fill="#fff" stroke-width="1"/>
<rect x="193.5" y="367.5" width="20" height="14" stroke="#ece8ec" fill="#fff" stroke-width="1"/>
<rect x="226.5" y="367.5" width="20" height="14" stroke="#ece8ec" fill="#fff" stroke-width="1"/>
<rect x="258.5" y="367.5" width="20" height="14" stroke="#ece8ec" fill="#fff" stroke-width="1"/>
<rect x="193.5" y="387.5" width="20" height="14" stroke="#ece8ec" fill="#fff" stroke-width="1"/>
<rect x="226.5" y="387.5" width="20" height="14" stroke="#ece8ec" fill="#fff" stroke-width="1"/>
<rect x="258.5" y="387.5" width="20" height="14" stroke="#ece8ec" fill="#fff" stroke-width="1"/>
<rect x="193.5" y="406.5" width="20" height="14" stroke="#ece8ec" fill="#fff" stroke-width="1"/>
<rect x="226.5" y="406.5" width="20" height="14" stroke="#ece8ec" fill="#fff" stroke-width="1"/>
<rect x="258.5" y="406.5" width="20" height="14" stroke="#ece8ec" fill="#fff" stroke-width="1"/>
<rect x="193.5" y="205.5" width="33" height="65" stroke="#ece8ec" fill="#fff" stroke-width="1"/>
<rect x="552.5" y="159.5" width="40" height="26" stroke="#ece8ec" fill="#fff" stroke-width="1"/>
<path d="M141.5 166.5 L239.5 166.5 L239.5 224.5 L226.5 224.5" stroke="#d3d3d3" stroke-width="1" fill="none"/>
<path d="M193.5 211.5 L187.5 211.5 L187.5 198.5 L422.5 198.5" stroke="#d3d3d3" stroke-width="1" fill="none"/>
<path d="M382.5 153.5 L422.5 153.5" stroke="#d3d3d3" stroke-width="1" fill="none"/>
<path d="M402.5 140.5 L402.5 153.5" stroke="#d3d3d3" stroke-width="1" fill="none"/>
<path d="M448.5 198.5 L506.5 198.5 L506.5 394.5 L454.5 394.5 L454.5 376.5" stroke="#d3d3d3" stroke-width="1" fill="none"/>
<path d="M226.5 257.5 L357.5 257.5" stroke="#d3d3d3" stroke-width="1" fill="none"/>
<path d="M337.5 237.5 L337.5 257.5" stroke="#d3d3d3" stroke-width="1" fill="none"/>
<path d="M252.5 257.5 L252.5 413.5 L258.5 413.5" stroke="#d3d3d3" stroke-width="1" fill="none"/>
<path d="M226.5 264.5 L343.5 264.5 L343.5 270.5 L357.5 270.5" stroke="#d3d3d3" stroke-width="1" fill="none"/>
<path d="M324.5 237.5 L324.5 264.5" stroke="#d3d3d3" stroke-width="1" fill="none"/>
<path d="M239.5 264.5 L239.5 335.5 L219.5 342.5 L219.5 413.5 L226.5 413.5" stroke="#d3d3d3" stroke-width="1" fill="none"/>
<path d="M193.5 244.5 L154.5 244.5 L154.5 407.5 L193.5 407.5 L193.5 413.5" stroke="#d3d3d3" stroke-width="1" fill="none"/>
<path d="M193.5 251.5 L161.5 251.5 L161.5 388.5 L252.5 388.5" stroke="#d3d3d3" stroke-width="1" fill="none"/>
<path d="M193.5 257.5 L167.5 257.5 L167.5 368.5 L252.5 368.5" stroke="#d3d3d3" stroke-width="1" fill="none"/>
<path d="M193.5 264.5 L174.5 264.5 L174.5 348.5 L252.5 348.5" stroke="#d3d3d3" stroke-width="1" fill="none"/>
<path d="M153.5 322.5 L357.5 322.5" stroke="#d3d3d3" stroke-width="1" fill="none"/>
<path d="M172.5 283.5 L357.5 283.5" stroke="#d3d3d3" stroke-width="1" fill="none"/>
<path d="M166.5 296.5 L357.5 296.5" stroke="#d3d3d3" stroke-width="1" fill="none"/>
<path d="M160.5 309.5 L357.5 309.5" stroke="#d3d3d3" stroke-width="1" fill="none"/>
<path d="M376.5 244.5 L484.5 244.5 L484.5 334.5" stroke="#d3d3d3" stroke-width="1" fill="none"/>
<path d="M419.5 244.5 L419.5 334.5" stroke="#d3d3d3" stroke-width="1" fill="none"/>
<path d="M451.5 244.5 L451.5 334.5" stroke="#d3d3d3" stroke-width="1" fill="none"/>
<path d="M369.5 334.5 L369.5 332.5 L489.5 332.5" stroke="#d3d3d3" stroke-width="1" fill="none"/>
<path d="M213.5 355.5 L219.5 355.5" stroke="#d3d3d3" stroke-width="1" fill="none"/>
<path d="M246.5 355.5 L252.5 355.5" stroke="#d3d3d3" stroke-width="1" fill="none"/>
<path d="M213.5 374.5 L219.5 374.5" stroke="#d3d3d3" stroke-width="1" fill="none"/>
<path d="M246.5 374.5 L252.5 374.5" stroke="#d3d3d3" stroke-width="1" fill="none"/>
<path d="M213.5 394.5 L219.5 394.5" stroke="#d3d3d3" stroke-width="1" fill="none"/>
<path d="M246.5 394.5 L252.5 394.5" stroke="#d3d3d3" stroke-width="1" fill="none"/>
<path d="M141.5 231.5 L193.5 231.5" stroke="#f00" stroke-width="1" fill="none"/>
<path d="M193.5 218.5 L180.5 218.5 L180.5 185.5 L461.5 185.5" stroke="#f00" stroke-width="1" fill="none"/>
<path d="M487.5 185.5 L513.5 185.5 L513.5 401.5 L487.5 401.5 L487.5 376.5" stroke="#f00" stroke-width="1" fill="none"/>
<path d="M226.5 211.5 L382.5 211.5" stroke="#f00" stroke-width="1" fill="none"/>
<path d="M408.5 211.5 L500.5 211.5 L500.5 388.5 L421.5 388.5 L421.5 376.5" stroke="#f00" stroke-width="1" fill="none"/>
<path d="M226.5 218.5 L252.5 218.5 L279.5 153.5 L356.5 153.5" stroke="#f00" stroke-width="1" fill="none"/>
<path d="M337.5 140.5 L337.5 153.5" stroke="#f00" stroke-width="1" fill="none"/>
<path d="M448.5 153.5 L552.5 153.5" stroke="#f00" stroke-width="1" fill="none"/>
<path d="M539.5 153.5 L539.5 172.5 L555.5 172.5" stroke="#f00" stroke-width="1" fill="none"/>
<path d="M226.5 244.5 L311.5 244.5 L311.5 237.5" stroke="#f00" stroke-width="1" fill="none"/>
<path d="M226.5 251.5 L350.5 251.5 L350.5 237.5" stroke="#f00" stroke-width="1" fill="none"/>
<path d="M350.5 244.5 L357.5 244.5" stroke="#f00" stroke-width="1" fill="none"/>
<path d="M284.5 251.5 L284.5 413.5" stroke="#f00" stroke-width="1" fill="none"/>
<path d="M278.5 355.5 L284.5 355.5" stroke="#f00" stroke-width="1" fill="none"/>
<path d="M278.5 374.5 L284.5 374.5" stroke="#f00" stroke-width="1" fill="none"/>
<path d="M278.5 394.5 L284.5 394.5" stroke="#f00" stroke-width="1" fill="none"/>
<path d="M278.5 413.5 L284.5 413.5" stroke="#f00" stroke-width="1" fill="none"/>
<path d="M376.5 257.5 L480.5 257.5 L480.5 336.5" stroke="#f00" stroke-width="1" fill="none"/>
<path d="M415.5 257.5 L415.5 336.5" stroke="#f00" stroke-width="1" fill="none"/>
<path d="M448.5 257.5 L448.5 336.5" stroke="#f00" stroke-width="1" fill="none"/>
<path d="M376.5 270.5 L477.5 270.5 L477.5 336.5" stroke="#f00" stroke-width="1" fill="none"/>
<path d="M412.5 270.5 L412.5 336.5" stroke="#f00" stroke-width="1" fill="none"/>
<path d="M444.5 270.5 L444.5 336.5" stroke="#f00" stroke-width="1" fill="none"/>
<path d="M376.5 283.5 L474.5 283.5 L474.5 336.5" stroke="#f00" stroke-width="1" fill="none"/>
<path d="M409.5 283.5 L409.5 336.5" stroke="#f00" stroke-width="1" fill="none"/>
<path d="M441.5 283.5 L441.5 336.5" stroke="#f00" stroke-width="1" fill="none"/>
<path d="M376.5 296.5 L471.5 296.5 L471.5 336.5" stroke="#f00" stroke-width="1" fill="none"/>
<path d="M405.5 296.5 L405.5 336.5" stroke="#f00" stroke-width="1" fill="none"/>
<path d="M438.5 296.5 L438.5 336.5" stroke="#f00" stroke-width="1" fill="none"/>
<path d="M376.5 309.5 L467.5 309.5 L467.5 336.5" stroke="#f00" stroke-width="1" fill="none"/>
<path d="M402.5 309.5 L402.5 336.5" stroke="#f00" stroke-width="1" fill="none"/>
<path d="M435.5 309.5 L435.5 336.5" stroke="#f00" stroke-width="1" fill="none"/>
<path d="M376.5 322.5 L464.5 322.5 L464.5 336.5" stroke="#f00" stroke-width="1" fill="none"/>
<path d="M399.5 322.5 L399.5 336.5" stroke="#f00" stroke-width="1" fill="none"/>
<path d="M432.5 322.5 L432.5 336.5" stroke="#f00" stroke-width="1" fill="none"/>
<circle cx="415.5" cy="257.5" r="1" fill="#f00"/>
<circle cx="448.5" cy="257.5" r="1" fill="#f00"/>
<circle cx="412.5" cy="270.5" r="1" fill="#f00"/>
<circle cx="444.5" cy="270.5" r="1" fill="#f00"/>
<circle cx="409.5" cy="283.5" r="1" fill="#f00"/>
<circle cx="441.5" cy="283.5" r="1" fill="#f00"/>
<circle cx="405.5" cy="296.5" r="1" fill="#f00"/>
<circle cx="438.5" cy="296.5" r="1" fill="#f00"/>
<circle cx="402.5" cy="309.5" r="1" fill="#f00"/>
<circle cx="435.5" cy="309.5" r="1" fill="#f00"/>
<circle cx="399.5" cy="322.5" r="1" fill="#f00"/>
<circle cx="432.5" cy="322.5" r="1" fill="#f00"/>
<circle cx="284.5" cy="251.5" r="1.6" fill="#f00"/>
<circle cx="284.5" cy="355.5" r="1.6" fill="#f00"/>
<circle cx="284.5" cy="374.5" r="1.6" fill="#f00"/>
<circle cx="284.5" cy="394.5" r="1.6" fill="#f00"/>
<circle cx="284.5" cy="413.5" r="1.6" fill="#f00"/>
<path d="M330.5 131.5 L344.5 131.5" stroke="#009a00" stroke-width="1" fill="none"/>
<rect x="334" y="133" width="7" height="1" fill="#009a00"/>
<rect x="334" y="135" width="7" height="1" fill="#009a00"/>
<rect x="335" y="137" width="5" height="1" fill="#009a00"/>
<path d="M340 137.5 L337.5 140" stroke="#009a00" stroke-width="1.2" fill="none"/>
<rect x="337" y="133" width="1" height="5" fill="#009a00"/>
<circle cx="337.5" cy="140.5" r="1.2" fill="#f00"/>
<path d="M395.5 131.5 L409.5 131.5" stroke="#009a00" stroke-width="1" fill="none"/>
<rect x="399" y="133" width="7" height="1" fill="#009a00"/>
<rect x="399" y="135" width="7" height="1" fill="#009a00"/>
<rect x="400" y="137" width="5" height="1" fill="#009a00"/>
<path d="M405 137.5 L402.5 140" stroke="#009a00" stroke-width="1.2" fill="none"/>
<rect x="402" y="133" width="1" height="5" fill="#009a00"/>
<circle cx="402.5" cy="140.5" r="1.2" fill="#f00"/>
<path d="M304.5 229.5 L318.5 229.5" stroke="#009a00" stroke-width="1" fill="none"/>
<rect x="308" y="231" width="7" height="1" fill="#009a00"/>
<rect x="308" y="233" width="7" height="1" fill="#009a00"/>
<rect x="309" y="235" width="5" height="1" fill="#009a00"/>
<path d="M314 235.5 L311.5 238" stroke="#009a00" stroke-width="1.2" fill="none"/>
<rect x="311" y="231" width="1" height="5" fill="#009a00"/>
<circle cx="311.5" cy="238.5" r="1.2" fill="#f00"/>
<path d="M317.5 229.5 L331.5 229.5" stroke="#009a00" stroke-width="1" fill="none"/>
<rect x="321" y="231" width="7" height="1" fill="#009a00"/>
<rect x="321" y="233" width="7" height="1" fill="#009a00"/>
<rect x="322" y="235" width="5" height="1" fill="#009a00"/>
<path d="M327 235.5 L324.5 238" stroke="#009a00" stroke-width="1.2" fill="none"/>
<rect x="324" y="231" width="1" height="5" fill="#009a00"/>
<circle cx="324.5" cy="238.5" r="1.2" fill="#f00"/>
<path d="M330.5 229.5 L344.5 229.5" stroke="#009a00" stroke-width="1" fill="none"/>
<rect x="334" y="231" width="7" height="1" fill="#009a00"/>
<rect x="334" y="233" width="7" height="1" fill="#009a00"/>
<rect x="335" y="235" width="5" height="1" fill="#009a00"/>
<path d="M340 235.5 L337.5 238" stroke="#009a00" stroke-width="1.2" fill="none"/>
<rect x="337" y="231" width="1" height="5" fill="#009a00"/>
<circle cx="337.5" cy="238.5" r="1.2" fill="#f00"/>
<path d="M343.5 229.5 L357.5 229.5" stroke="#009a00" stroke-width="1" fill="none"/>
<rect x="347" y="231" width="7" height="1" fill="#009a00"/>
<rect x="347" y="233" width="7" height="1" fill="#009a00"/>
<rect x="348" y="235" width="5" height="1" fill="#009a00"/>
<path d="M353 235.5 L350.5 238" stroke="#009a00" stroke-width="1.2" fill="none"/>
<rect x="350" y="231" width="1" height="5" fill="#009a00"/>
<circle cx="350.5" cy="238.5" r="1.2" fill="#f00"/>
<path d="M304.5 229.5 L357.5 229.5" stroke="#009a00" stroke-width="1" fill="none"/>
<path d="M356.5 153.5 L362.5 153.5" stroke="#009a00" stroke-width="1" fill="none"/>
<path d="M362.5 147 L374 153.5 L362.5 160 Z" stroke="#009a00" stroke-width="1.1" fill="none"/>
<circle cx="375.7" cy="153.5" r="1.7" stroke="#009a00" fill="none" stroke-width="1"/>
<path d="M378 153.5 L382.5 153.5" stroke="#009a00" stroke-width="1" fill="none"/>
<rect x="355" y="152.5" width="3" height="2" fill="#f00"/>
<rect x="380" y="152.5" width="3" height="2" fill="#f00"/>
<rect x="357.5" y="150.5" width="1.5" height="1.2" fill="#f00"/>
<rect x="378.5" y="150.5" width="1.2" height="1.2" fill="#f00"/>
<path d="M422.5 153.5 L428.5 153.5" stroke="#009a00" stroke-width="1" fill="none"/>
<path d="M428.5 147 L440 153.5 L428.5 160 Z" stroke="#009a00" stroke-width="1.1" fill="none"/>
<circle cx="441.7" cy="153.5" r="1.7" stroke="#009a00" fill="none" stroke-width="1"/>
<path d="M444 153.5 L448.5 153.5" stroke="#009a00" stroke-width="1" fill="none"/>
<rect x="421" y="152.5" width="3" height="2" fill="#f00"/>
<rect x="446" y="152.5" width="3" height="2" fill="#f00"/>
<rect x="423.5" y="150.5" width="1.5" height="1.2" fill="#f00"/>
<rect x="444.5" y="150.5" width="1.2" height="1.2" fill="#f00"/>
<path d="M382.5 211.5 L388.5 211.5" stroke="#009a00" stroke-width="1" fill="none"/>
<path d="M388.5 205 L400 211.5 L388.5 218 Z" stroke="#009a00" stroke-width="1.1" fill="none"/>
<path d="M400 211.5 L408.5 211.5" stroke="#009a00" stroke-width="1" fill="none"/>
<rect x="381" y="210.5" width="3" height="2" fill="#f00"/>
<rect x="406" y="210.5" width="3" height="2" fill="#f00"/>
<rect x="383.5" y="208.5" width="1.5" height="1.2" fill="#f00"/>
<rect x="404.5" y="208.5" width="1.2" height="1.2" fill="#f00"/>
<path d="M461.5 185.5 L467.5 185.5" stroke="#009a00" stroke-width="1" fill="none"/>
<path d="M467.5 179 L479 185.5 L467.5 192 Z" stroke="#009a00" stroke-width="1.1" fill="none"/>
<path d="M479 185.5 L487.5 185.5" stroke="#009a00" stroke-width="1" fill="none"/>
<rect x="460" y="184.5" width="3" height="2" fill="#f00"/>
<rect x="485" y="184.5" width="3" height="2" fill="#f00"/>
<rect x="462.5" y="182.5" width="1.5" height="1.2" fill="#f00"/>
<rect x="483.5" y="182.5" width="1.2" height="1.2" fill="#f00"/>
<path d="M422.5 198.5 L428.5 198.5" stroke="#009a00" stroke-width="1" fill="none"/>
<path d="M428.5 192 L440 198.5 L428.5 205 Z" stroke="#009a00" stroke-width="1.1" fill="none"/>
<path d="M440 198.5 L448.5 198.5" stroke="#009a00" stroke-width="1" fill="none"/>
<rect x="421" y="197.5" width="3" height="2" fill="#f00"/>
<rect x="446" y="197.5" width="3" height="2" fill="#f00"/>
<rect x="423.5" y="195.5" width="1.5" height="1.2" fill="#f00"/>
<rect x="444.5" y="195.5" width="1.2" height="1.2" fill="#f00"/>
<path d="M357.5 244.5 L361.5 244.5" stroke="#009a00" stroke-width="1" fill="none"/>
<path d="M361.5 240 L369 244.5 L361.5 249 Z" stroke="#009a00" stroke-width="1.1" fill="none"/>
<circle cx="370.7" cy="244.5" r="1.7" stroke="#009a00" fill="none" stroke-width="1"/>
<path d="M373 244.5 L377.5 244.5" stroke="#009a00" stroke-width="1" fill="none"/>
<rect x="356" y="243.5" width="3" height="2" fill="#f00"/>
<rect x="375" y="243.5" width="3" height="2" fill="#f00"/>
<rect x="358.5" y="241.5" width="1.5" height="1.2" fill="#f00"/>
<rect x="373.5" y="241.5" width="1.2" height="1.2" fill="#f00"/>
<path d="M357.5 257.5 L361.5 257.5" stroke="#009a00" stroke-width="1" fill="none"/>
<path d="M361.5 253 L369 257.5 L361.5 262 Z" stroke="#009a00" stroke-width="1.1" fill="none"/>
<circle cx="370.7" cy="257.5" r="1.7" stroke="#009a00" fill="none" stroke-width="1"/>
<path d="M373 257.5 L377.5 257.5" stroke="#009a00" stroke-width="1" fill="none"/>
<rect x="356" y="256.5" width="3" height="2" fill="#f00"/>
<rect x="375" y="256.5" width="3" height="2" fill="#f00"/>
<rect x="358.5" y="254.5" width="1.5" height="1.2" fill="#f00"/>
<rect x="373.5" y="254.5" width="1.2" height="1.2" fill="#f00"/>
<path d="M357.5 270.5 L361.5 270.5" stroke="#009a00" stroke-width="1" fill="none"/>
<path d="M361.5 266 L369 270.5 L361.5 275 Z" stroke="#009a00" stroke-width="1.1" fill="none"/>
<circle cx="370.7" cy="270.5" r="1.7" stroke="#009a00" fill="none" stroke-width="1"/>
<path d="M373 270.5 L377.5 270.5" stroke="#009a00" stroke-width="1" fill="none"/>
<rect x="356" y="269.5" width="3" height="2" fill="#f00"/>
<rect x="375" y="269.5" width="3" height="2" fill="#f00"/>
<rect x="358.5" y="267.5" width="1.5" height="1.2" fill="#f00"/>
<rect x="373.5" y="267.5" width="1.2" height="1.2" fill="#f00"/>
<path d="M357.5 283.5 L361.5 283.5" stroke="#009a00" stroke-width="1" fill="none"/>
<path d="M361.5 279 L369 283.5 L361.5 288 Z" stroke="#009a00" stroke-width="1.1" fill="none"/>
<circle cx="370.7" cy="283.5" r="1.7" stroke="#009a00" fill="none" stroke-width="1"/>
<path d="M373 283.5 L377.5 283.5" stroke="#009a00" stroke-width="1" fill="none"/>
<rect x="356" y="282.5" width="3" height="2" fill="#f00"/>
<rect x="375" y="282.5" width="3" height="2" fill="#f00"/>
<rect x="358.5" y="280.5" width="1.5" height="1.2" fill="#f00"/>
<rect x="373.5" y="280.5" width="1.2" height="1.2" fill="#f00"/>
<path d="M357.5 296.5 L361.5 296.5" stroke="#009a00" stroke-width="1" fill="none"/>
<path d="M361.5 292 L369 296.5 L361.5 301 Z" stroke="#009a00" stroke-width="1.1" fill="none"/>
<circle cx="370.7" cy="296.5" r="1.7" stroke="#009a00" fill="none" stroke-width="1"/>
<path d="M373 296.5 L377.5 296.5" stroke="#009a00" stroke-width="1" fill="none"/>
<rect x="356" y="295.5" width="3" height="2" fill="#f00"/>
<rect x="375" y="295.5" width="3" height="2" fill="#f00"/>
<rect x="358.5" y="293.5" width="1.5" height="1.2" fill="#f00"/>
<rect x="373.5" y="293.5" width="1.2" height="1.2" fill="#f00"/>
<path d="M357.5 309.5 L361.5 309.5" stroke="#009a00" stroke-width="1" fill="none"/>
<path d="M361.5 305 L369 309.5 L361.5 314 Z" stroke="#009a00" stroke-width="1.1" fill="none"/>
<circle cx="370.7" cy="309.5" r="1.7" stroke="#009a00" fill="none" stroke-width="1"/>
<path d="M373 309.5 L377.5 309.5" stroke="#009a00" stroke-width="1" fill="none"/>
<rect x="356" y="308.5" width="3" height="2" fill="#f00"/>
<rect x="375" y="308.5" width="3" height="2" fill="#f00"/>
<rect x="358.5" y="306.5" width="1.5" height="1.2" fill="#f00"/>
<rect x="373.5" y="306.5" width="1.2" height="1.2" fill="#f00"/>
<path d="M357.5 322.5 L361.5 322.5" stroke="#009a00" stroke-width="1" fill="none"/>
<path d="M361.5 318 L369 322.5 L361.5 327 Z" stroke="#009a00" stroke-width="1.1" fill="none"/>
<circle cx="370.7" cy="322.5" r="1.7" stroke="#009a00" fill="none" stroke-width="1"/>
<path d="M373 322.5 L377.5 322.5" stroke="#009a00" stroke-width="1" fill="none"/>
<rect x="356" y="321.5" width="3" height="2" fill="#f00"/>
<rect x="375" y="321.5" width="3" height="2" fill="#f00"/>
<rect x="358.5" y="319.5" width="1.5" height="1.2" fill="#f00"/>
<rect x="373.5" y="319.5" width="1.2" height="1.2" fill="#f00"/>
<rect x="193.5" y="205.5" width="33" height="65" stroke="#009a00" fill="none" stroke-width="1"/>
<rect x="193" y="210" width="3" height="2" fill="#f00"/>
<rect x="197" y="210" width="2" height="1" fill="#f00"/>
<rect x="198" y="211" width="2" height="1" fill="#f00"/>
<rect x="224" y="210" width="3" height="2" fill="#f00"/>
<rect x="221" y="210" width="2" height="1" fill="#f00"/>
<rect x="220" y="211" width="2" height="1" fill="#f00"/>
<rect x="193" y="217" width="3" height="2" fill="#f00"/>
<rect x="197" y="217" width="2" height="1" fill="#f00"/>
<rect x="198" y="218" width="2" height="1" fill="#f00"/>
<rect x="224" y="217" width="3" height="2" fill="#f00"/>
<rect x="221" y="217" width="2" height="1" fill="#f00"/>
<rect x="220" y="218" width="2" height="1" fill="#f00"/>
<rect x="193" y="223" width="3" height="2" fill="#f00"/>
<rect x="197" y="223" width="2" height="1" fill="#f00"/>
<rect x="198" y="224" width="2" height="1" fill="#f00"/>
<rect x="224" y="223" width="3" height="2" fill="#f00"/>
<rect x="221" y="223" width="2" height="1" fill="#f00"/>
<rect x="220" y="224" width="2" height="1" fill="#f00"/>
<rect x="193" y="230" width="3" height="2" fill="#f00"/>
<rect x="197" y="230" width="2" height="1" fill="#f00"/>
<rect x="198" y="231" width="2" height="1" fill="#f00"/>
<rect x="224" y="230" width="3" height="2" fill="#f00"/>
<rect x="221" y="230" width="2" height="1" fill="#f00"/>
<rect x="220" y="231" width="2" height="1" fill="#f00"/>
<rect x="193" y="236" width="3" height="2" fill="#f00"/>
<rect x="197" y="236" width="2" height="1" fill="#f00"/>
<rect x="198" y="237" width="2" height="1" fill="#f00"/>
<rect x="224" y="236" width="3" height="2" fill="#f00"/>
<rect x="221" y="236" width="2" height="1" fill="#f00"/>
<rect x="220" y="237" width="2" height="1" fill="#f00"/>
<rect x="193" y="243" width="3" height="2" fill="#f00"/>
<rect x="197" y="243" width="2" height="1" fill="#f00"/>
<rect x="198" y="244" width="2" height="1" fill="#f00"/>
<rect x="224" y="243" width="3" height="2" fill="#f00"/>
<rect x="221" y="243" width="2" height="1" fill="#f00"/>
<rect x="220" y="244" width="2" height="1" fill="#f00"/>
<rect x="193" y="249" width="3" height="2" fill="#f00"/>
<rect x="197" y="249" width="2" height="1" fill="#f00"/>
<rect x="198" y="250" width="2" height="1" fill="#f00"/>
<rect x="224" y="249" width="3" height="2" fill="#f00"/>
<rect x="221" y="249" width="2" height="1" fill="#f00"/>
<rect x="220" y="250" width="2" height="1" fill="#f00"/>
<rect x="193" y="256" width="3" height="2" fill="#f00"/>
<rect x="197" y="256" width="2" height="1" fill="#f00"/>
<rect x="198" y="257" width="2" height="1" fill="#f00"/>
<rect x="224" y="256" width="3" height="2" fill="#f00"/>
<rect x="221" y="256" width="2" height="1" fill="#f00"/>
<rect x="220" y="257" width="2" height="1" fill="#f00"/>
<rect x="193" y="262" width="3" height="2" fill="#f00"/>
<rect x="197" y="262" width="2" height="1" fill="#f00"/>
<rect x="198" y="263" width="2" height="1" fill="#f00"/>
<rect x="224" y="262" width="3" height="2" fill="#f00"/>
<rect x="221" y="262" width="2" height="1" fill="#f00"/>
<rect x="220" y="263" width="2" height="1" fill="#f00"/>
<path d="M199 224 H220" stroke="#f00" stroke-width="1.6" stroke-dasharray="2.5 1.8" fill="none"/>
<path d="M199 231 H220" stroke="#f00" stroke-width="1.6" stroke-dasharray="2.5 1.8" fill="none"/>
<text x="201.5" y="241" font-size="10.5" fill="#000">PIC</text>
<text x="198.5" y="254" font-size="10.5" fill="#000">'C84</text>
<path d="M115.5 153.5 H138.5 V156 L141.5 160 V172 L138.5 176 V179.5 H115.5 Z" stroke="#009a00" stroke-width="1.2" fill="none"/>
<circle cx="122" cy="166.5" r="2.9" fill="#f00" stroke="#009a00" stroke-width="1"/>
<path d="M128 171.5 H130.5 V161.5 H138.5 M133.5 161.5 V171.5 H136.5 V161.5" stroke="#009a00" stroke-width="1.1" fill="none"/>
<rect x="136" y="165" width="2" height="2" fill="#f00"/>
<rect x="139" y="165" width="2" height="2" fill="#f00"/>
<rect x="141" y="165" width="2" height="2" fill="#f00"/>
<path d="M115.5 226.5 H136.5 L140.5 231.5 L136.5 236.5 H115.5 Z" stroke="#009a00" stroke-width="1.3" fill="none"/>
<circle cx="120.5" cy="231.5" r="2.6" fill="#f00" stroke="#009a00" stroke-width="1"/>
<path d="M128 229.5 H131.5 V234 H134.5 V229.5 H139" stroke="#009a00" stroke-width="1.2" fill="none"/>
<rect x="140" y="229" width="3" height="4" fill="#f00"/>
<path d="M552.5 148.5 H560 L565.5 153.5 L560 158.5 H552.5 Z" stroke="#009a00" stroke-width="1.3" fill="none"/>
<circle cx="557.5" cy="153.5" r="2.7" fill="#f00" stroke="#009a00" stroke-width="1"/>
<rect x="566" y="151" width="1" height="3" fill="#d000d0"/>
<rect x="568" y="151" width="1" height="2" fill="#d000d0"/>
<path d="M552.5 160.5 L552.5 185.5 L591.5 185.5 L591.5 159.5 L566.5 159.5" stroke="#009a00" stroke-width="1" fill="none"/>
<rect x="552" y="171" width="4" height="3" fill="#f00"/>
<path d="M369.5 335.5 L369.5 347.5" stroke="#009a00" stroke-width="1" fill="none"/>
<path d="M363.5 340 L369.5 347.5 L376 340" stroke="#009a00" stroke-width="1.2" fill="none"/>
<rect x="368" y="334" width="2" height="2" fill="#f00"/>
<path d="M195 355.5 H204 L205.5 354.5 H207.5 L209 355.5 H212" stroke="#009a00" stroke-width="1.2" fill="none"/>
<path d="M197.5 353 V358 M200.5 353 V358 M196.5 354 H201.5 M196.5 357 H201.5" stroke="#009a00" stroke-width="1.1" fill="none"/>
<path d="M204.5 352.5 H208.5 M206.5 352.5 V354.5" stroke="#009a00" stroke-width="1.2" fill="none"/>
<path d="M205.5 357 L208 357 L209 358.5 L207 361 L205.5 359.5 Z" stroke="#1c6c1c" stroke-width="0.5" fill="#1c6c1c"/>
<circle cx="210.5" cy="352.5" r="0.8" fill="#f00"/>
<path d="M195.5 354 H194.5 V356.5 H193.5" stroke="#f00" stroke-width="1.1" fill="none"/>
<path d="M213.5 354 H212.5 V356.5 H213.5" stroke="#f00" stroke-width="1.1" fill="none"/>
<path d="M228 355.5 H237 L238.5 354.5 H240.5 L242 355.5 H245" stroke="#009a00" stroke-width="1.2" fill="none"/>
<path d="M230.5 353 V358 M233.5 353 V358 M229.5 354 H234.5 M229.5 357 H234.5" stroke="#009a00" stroke-width="1.1" fill="none"/>
<path d="M237.5 352.5 H241.5 M239.5 352.5 V354.5" stroke="#009a00" stroke-width="1.2" fill="none"/>
<path d="M238.5 357 L241 357 L242 358.5 L240 361 L238.5 359.5 Z" stroke="#1c6c1c" stroke-width="0.5" fill="#1c6c1c"/>
<circle cx="243.5" cy="352.5" r="0.8" fill="#f00"/>
<path d="M228.5 354 H227.5 V356.5 H226.5" stroke="#f00" stroke-width="1.1" fill="none"/>
<path d="M246.5 354 H245.5 V356.5 H246.5" stroke="#f00" stroke-width="1.1" fill="none"/>
<path d="M260 355.5 H269 L270.5 354.5 H272.5 L274 355.5 H277" stroke="#009a00" stroke-width="1.2" fill="none"/>
<path d="M262.5 353 V358 M265.5 353 V358 M261.5 354 H266.5 M261.5 357 H266.5" stroke="#009a00" stroke-width="1.1" fill="none"/>
<path d="M269.5 352.5 H273.5 M271.5 352.5 V354.5" stroke="#009a00" stroke-width="1.2" fill="none"/>
<path d="M270.5 357 L273 357 L274 358.5 L272 361 L270.5 359.5 Z" stroke="#1c6c1c" stroke-width="0.5" fill="#1c6c1c"/>
<circle cx="275.5" cy="352.5" r="0.8" fill="#f00"/>
<path d="M260.5 354 H259.5 V356.5 H258.5" stroke="#f00" stroke-width="1.1" fill="none"/>
<path d="M278.5 354 H277.5 V356.5 H278.5" stroke="#f00" stroke-width="1.1" fill="none"/>
<path d="M195 374.5 H204 L205.5 373.5 H207.5 L209 374.5 H212" stroke="#009a00" stroke-width="1.2" fill="none"/>
<path d="M197.5 372 V377 M200.5 372 V377 M196.5 373 H201.5 M196.5 376 H201.5" stroke="#009a00" stroke-width="1.1" fill="none"/>
<path d="M204.5 371.5 H208.5 M206.5 371.5 V373.5" stroke="#009a00" stroke-width="1.2" fill="none"/>
<path d="M205.5 376 L208 376 L209 377.5 L207 380 L205.5 378.5 Z" stroke="#1c6c1c" stroke-width="0.5" fill="#1c6c1c"/>
<circle cx="210.5" cy="371.5" r="0.8" fill="#f00"/>
<path d="M195.5 373 H194.5 V375.5 H193.5" stroke="#f00" stroke-width="1.1" fill="none"/>
<path d="M213.5 373 H212.5 V375.5 H213.5" stroke="#f00" stroke-width="1.1" fill="none"/>
<path d="M228 374.5 H237 L238.5 373.5 H240.5 L242 374.5 H245" stroke="#009a00" stroke-width="1.2" fill="none"/>
<path d="M230.5 372 V377 M233.5 372 V377 M229.5 373 H234.5 M229.5 376 H234.5" stroke="#009a00" stroke-width="1.1" fill="none"/>
<path d="M237.5 371.5 H241.5 M239.5 371.5 V373.5" stroke="#009a00" stroke-width="1.2" fill="none"/>
<path d="M238.5 376 L241 376 L242 377.5 L240 380 L238.5 378.5 Z" stroke="#1c6c1c" stroke-width="0.5" fill="#1c6c1c"/>
<circle cx="243.5" cy="371.5" r="0.8" fill="#f00"/>
<path d="M228.5 373 H227.5 V375.5 H226.5" stroke="#f00" stroke-width="1.1" fill="none"/>
<path d="M246.5 373 H245.5 V375.5 H246.5" stroke="#f00" stroke-width="1.1" fill="none"/>
<path d="M260 374.5 H269 L270.5 373.5 H272.5 L274 374.5 H277" stroke="#009a00" stroke-width="1.2" fill="none"/>
<path d="M262.5 372 V377 M265.5 372 V377 M261.5 373 H266.5 M261.5 376 H266.5" stroke="#009a00" stroke-width="1.1" fill="none"/>
<path d="M269.5 371.5 H273.5 M271.5 371.5 V373.5" stroke="#009a00" stroke-width="1.2" fill="none"/>
<path d="M270.5 376 L273 376 L274 377.5 L272 380 L270.5 378.5 Z" stroke="#1c6c1c" stroke-width="0.5" fill="#1c6c1c"/>
<circle cx="275.5" cy="371.5" r="0.8" fill="#f00"/>
<path d="M260.5 373 H259.5 V375.5 H258.5" stroke="#f00" stroke-width="1.1" fill="none"/>
<path d="M278.5 373 H277.5 V375.5 H278.5" stroke="#f00" stroke-width="1.1" fill="none"/>
<path d="M195 394.5 H204 L205.5 393.5 H207.5 L209 394.5 H212" stroke="#009a00" stroke-width="1.2" fill="none"/>
<path d="M197.5 392 V397 M200.5 392 V397 M196.5 393 H201.5 M196.5 396 H201.5" stroke="#009a00" stroke-width="1.1" fill="none"/>
<path d="M204.5 391.5 H208.5 M206.5 391.5 V393.5" stroke="#009a00" stroke-width="1.2" fill="none"/>
<path d="M205.5 396 L208 396 L209 397.5 L207 400 L205.5 398.5 Z" stroke="#1c6c1c" stroke-width="0.5" fill="#1c6c1c"/>
<circle cx="210.5" cy="391.5" r="0.8" fill="#f00"/>
<path d="M195.5 393 H194.5 V395.5 H193.5" stroke="#f00" stroke-width="1.1" fill="none"/>
<path d="M213.5 393 H212.5 V395.5 H213.5" stroke="#f00" stroke-width="1.1" fill="none"/>
<path d="M228 394.5 H237 L238.5 393.5 H240.5 L242 394.5 H245" stroke="#009a00" stroke-width="1.2" fill="none"/>
<path d="M230.5 392 V397 M233.5 392 V397 M229.5 393 H234.5 M229.5 396 H234.5" stroke="#009a00" stroke-width="1.1" fill="none"/>
<path d="M237.5 391.5 H241.5 M239.5 391.5 V393.5" stroke="#009a00" stroke-width="1.2" fill="none"/>
<path d="M238.5 396 L241 396 L242 397.5 L240 400 L238.5 398.5 Z" stroke="#1c6c1c" stroke-width="0.5" fill="#1c6c1c"/>
<circle cx="243.5" cy="391.5" r="0.8" fill="#f00"/>
<path d="M228.5 393 H227.5 V395.5 H226.5" stroke="#f00" stroke-width="1.1" fill="none"/>
<path d="M246.5 393 H245.5 V395.5 H246.5" stroke="#f00" stroke-width="1.1" fill="none"/>
<path d="M260 394.5 H269 L270.5 393.5 H272.5 L274 394.5 H277" stroke="#009a00" stroke-width="1.2" fill="none"/>
<path d="M262.5 392 V397 M265.5 392 V397 M261.5 393 H266.5 M261.5 396 H266.5" stroke="#009a00" stroke-width="1.1" fill="none"/>
<path d="M269.5 391.5 H273.5 M271.5 391.5 V393.5" stroke="#009a00" stroke-width="1.2" fill="none"/>
<path d="M270.5 396 L273 396 L274 397.5 L272 400 L270.5 398.5 Z" stroke="#1c6c1c" stroke-width="0.5" fill="#1c6c1c"/>
<circle cx="275.5" cy="391.5" r="0.8" fill="#f00"/>
<path d="M260.5 393 H259.5 V395.5 H258.5" stroke="#f00" stroke-width="1.1" fill="none"/>
<path d="M278.5 393 H277.5 V395.5 H278.5" stroke="#f00" stroke-width="1.1" fill="none"/>
<path d="M195 413.5 H204 L205.5 412.5 H207.5 L209 413.5 H212" stroke="#009a00" stroke-width="1.2" fill="none"/>
<path d="M197.5 411 V416 M200.5 411 V416 M196.5 412 H201.5 M196.5 415 H201.5" stroke="#009a00" stroke-width="1.1" fill="none"/>
<path d="M204.5 410.5 H208.5 M206.5 410.5 V412.5" stroke="#009a00" stroke-width="1.2" fill="none"/>
<path d="M205.5 415 L208 415 L209 416.5 L207 419 L205.5 417.5 Z" stroke="#1c6c1c" stroke-width="0.5" fill="#1c6c1c"/>
<circle cx="210.5" cy="410.5" r="0.8" fill="#f00"/>
<path d="M195.5 412 H194.5 V414.5 H193.5" stroke="#f00" stroke-width="1.1" fill="none"/>
<path d="M213.5 412 H212.5 V414.5 H213.5" stroke="#f00" stroke-width="1.1" fill="none"/>
<path d="M228 413.5 H237 L238.5 412.5 H240.5 L242 413.5 H245" stroke="#009a00" stroke-width="1.2" fill="none"/>
<path d="M230.5 411 V416 M233.5 411 V416 M229.5 412 H234.5 M229.5 415 H234.5" stroke="#009a00" stroke-width="1.1" fill="none"/>
<path d="M237.5 410.5 H241.5 M239.5 410.5 V412.5" stroke="#009a00" stroke-width="1.2" fill="none"/>
<path d="M238.5 415 L241 415 L242 416.5 L240 419 L238.5 417.5 Z" stroke="#1c6c1c" stroke-width="0.5" fill="#1c6c1c"/>
<circle cx="243.5" cy="410.5" r="0.8" fill="#f00"/>
<path d="M228.5 412 H227.5 V414.5 H226.5" stroke="#f00" stroke-width="1.1" fill="none"/>
<path d="M246.5 412 H245.5 V414.5 H246.5" stroke="#f00" stroke-width="1.1" fill="none"/>
<path d="M260 413.5 H269 L270.5 412.5 H272.5 L274 413.5 H277" stroke="#009a00" stroke-width="1.2" fill="none"/>
<path d="M262.5 411 V416 M265.5 411 V416 M261.5 412 H266.5 M261.5 415 H266.5" stroke="#009a00" stroke-width="1.1" fill="none"/>
<path d="M269.5 410.5 H273.5 M271.5 410.5 V412.5" stroke="#009a00" stroke-width="1.2" fill="none"/>
<path d="M270.5 415 L273 415 L274 416.5 L272 419 L270.5 417.5 Z" stroke="#1c6c1c" stroke-width="0.5" fill="#1c6c1c"/>
<circle cx="275.5" cy="410.5" r="0.8" fill="#f00"/>
<path d="M260.5 412 H259.5 V414.5 H258.5" stroke="#f00" stroke-width="1.1" fill="none"/>
<path d="M278.5 412 H277.5 V414.5 H278.5" stroke="#f00" stroke-width="1.1" fill="none"/>
<rect x="397" y="340" width="27" height="36" fill="#000"/>
<rect x="398" y="341" width="25" height="34" fill="#5c5c5c"/>
<path d="M404.5 344.5 L419.5 344.5" stroke="#7a7a7a" stroke-width="1.8"/>
<path d="M419.5 344.5 L418 357.5" stroke="#7a7a7a" stroke-width="1.8"/>
<path d="M404.5 344.5 L403 357.5" stroke="#7a7a7a" stroke-width="1.8"/>
<path d="M403 357.5 L418 357.5" stroke="#7a7a7a" stroke-width="1.8"/>
<path d="M403 357.5 L401.5 370" stroke="#7a7a7a" stroke-width="1.8"/>
<path d="M418 357.5 L416.5 370" stroke="#7a7a7a" stroke-width="1.8"/>
<path d="M401.5 370 L416.5 370" stroke="#7a7a7a" stroke-width="1.8"/>
<path d="M417.5 369 L419.5 371" stroke="#7a7a7a" stroke-width="1.8" fill="none"/>
<rect x="399" y="335" width="2" height="2" fill="#f00"/>
<rect x="402.2" y="335" width="2" height="2" fill="#f00"/>
<rect x="405.4" y="335" width="2" height="2" fill="#f00"/>
<rect x="408.6" y="335" width="2" height="2" fill="#f00"/>
<rect x="411.8" y="335" width="2" height="2" fill="#f00"/>
<rect x="415" y="335" width="2" height="2" fill="#f00"/>
<rect x="418.2" y="335" width="2" height="2" fill="#f00"/>
<rect x="421.4" y="335" width="2" height="2" fill="#f00"/>
<rect x="421" y="376" width="2" height="3" fill="#f00"/>
<rect x="430" y="340" width="27" height="36" fill="#000"/>
<rect x="431" y="341" width="25" height="34" fill="#5c5c5c"/>
<path d="M437.5 344.5 L452.5 344.5" stroke="#f00" stroke-width="2.2"/>
<path d="M452.5 344.5 L451 357.5" stroke="#f00" stroke-width="2.2"/>
<path d="M437.5 344.5 L436 357.5" stroke="#f00" stroke-width="2.2"/>
<path d="M436 357.5 L451 357.5" stroke="#7a7a7a" stroke-width="1.8"/>
<path d="M436 357.5 L434.5 370" stroke="#f00" stroke-width="2.2"/>
<path d="M451 357.5 L449.5 370" stroke="#f00" stroke-width="2.2"/>
<path d="M434.5 370 L449.5 370" stroke="#f00" stroke-width="2.2"/>
<path d="M450.5 369 L452.5 371" stroke="#7a7a7a" stroke-width="1.8" fill="none"/>
<rect x="432" y="335" width="2" height="2" fill="#f00"/>
<rect x="435.2" y="335" width="2" height="2" fill="#f00"/>
<rect x="438.4" y="335" width="2" height="2" fill="#f00"/>
<rect x="441.6" y="335" width="2" height="2" fill="#f00"/>
<rect x="444.8" y="335" width="2" height="2" fill="#f00"/>
<rect x="448" y="335" width="2" height="2" fill="#f00"/>
<rect x="451.2" y="335" width="2" height="2" fill="#f00"/>
<rect x="454.4" y="335" width="2" height="2" fill="#f00"/>
<rect x="454" y="376" width="2" height="3" fill="#f00"/>
<rect x="462" y="340" width="27" height="36" fill="#000"/>
<rect x="463" y="341" width="25" height="34" fill="#5c5c5c"/>
<path d="M469.5 344.5 L484.5 344.5" stroke="#7a7a7a" stroke-width="1.8"/>
<path d="M484.5 344.5 L483 357.5" stroke="#7a7a7a" stroke-width="1.8"/>
<path d="M469.5 344.5 L468 357.5" stroke="#7a7a7a" stroke-width="1.8"/>
<path d="M468 357.5 L483 357.5" stroke="#7a7a7a" stroke-width="1.8"/>
<path d="M468 357.5 L466.5 370" stroke="#7a7a7a" stroke-width="1.8"/>
<path d="M483 357.5 L481.5 370" stroke="#7a7a7a" stroke-width="1.8"/>
<path d="M466.5 370 L481.5 370" stroke="#7a7a7a" stroke-width="1.8"/>
<path d="M482.5 369 L484.5 371" stroke="#7a7a7a" stroke-width="1.8" fill="none"/>
<rect x="464" y="335" width="2" height="2" fill="#f00"/>
<rect x="467.2" y="335" width="2" height="2" fill="#f00"/>
<rect x="470.4" y="335" width="2" height="2" fill="#f00"/>
<rect x="473.6" y="335" width="2" height="2" fill="#f00"/>
<rect x="476.8" y="335" width="2" height="2" fill="#f00"/>
<rect x="480" y="335" width="2" height="2" fill="#f00"/>
<rect x="483.2" y="335" width="2" height="2" fill="#f00"/>
<rect x="486.4" y="335" width="2" height="2" fill="#f00"/>
<rect x="486" y="376" width="2" height="3" fill="#f00"/>
<path d="M216.5 427.5 L216.5 433.5" stroke="#000" stroke-width="1" fill="none"/>
<path d="M213.5 430.5 L219.5 430.5" stroke="#000" stroke-width="1" fill="none"/>
 </svg>

 <!-- title buttons -->
 <svg width="700" height="22" style="position:absolute;left:0;top:0">
  <rect x="2" y="2" width="19" height="17" fill="#dcd6dc" opacity="0.7"/>
  <path d="M7 7 L12 12 L17 7" stroke="#8c8a8c" stroke-width="3" fill="none"/>
  <rect x="21" y="1" width="1" height="18" fill="#bdbabd"/>
  <rect x="637" y="1" width="62" height="18" fill="#dcd8dc" opacity="0.6"/>
  <rect x="636" y="1" width="1" height="18" fill="#bdbabd"/>
  <rect x="642" y="11" width="10" height="3.5" rx="1.7" fill="#969296"/>
  <rect x="663.5" y="5.5" width="9" height="9" stroke="#969296" fill="none"/>
  <rect x="663" y="5" width="10" height="3" fill="#969296"/>
  <path d="M685.5 6.5 L693 14 M693 6.5 L685.5 14" stroke="#969296" stroke-width="3.2"/>
 </svg>
 <!-- scrollbars -->
 <svg width="700" height="500" style="position:absolute;left:0;top:0" shape-rendering="crispEdges">
  <rect x="676" y="91" width="18" height="343" fill="#c6c3c6"/>
  <rect x="676" y="91" width="1" height="344" fill="#7b7b7b"/>
  <rect x="693" y="91" width="1" height="343" fill="#e6e6e6"/>
  <rect x="677" y="91" width="16" height="21" fill="#aea8ae"/>
  <rect x="677" y="107" width="16" height="1" fill="#7b7b7b"/>
  <rect x="677" y="112" width="16" height="301" fill="#c6c3c6"/>
  <rect x="677" y="112" width="16" height="1" fill="#ececec"/>
  <rect x="677" y="112" width="1" height="301" fill="#ececec"/>
  <rect x="692" y="112" width="1" height="301" fill="#7b7b7b"/>
  <rect x="677" y="412" width="16" height="1" fill="#7b7b7b"/>
  <rect x="677" y="413" width="16" height="20" fill="#aea8ae"/>
  <rect x="677" y="417" width="16" height="1" fill="#ececec"/>
  <rect x="5" y="434" width="672" height="1" fill="#c6c3c6"/>
  <rect x="187" y="434" width="490" height="1" fill="#7b7b7b"/>
  <rect x="187" y="434" width="1" height="18" fill="#7b7b7b"/>
  <rect x="187" y="451" width="490" height="1" fill="#ececec"/>
  <rect x="188" y="435" width="22" height="16" fill="#aea8ae"/>
  <rect x="203" y="435" width="1" height="16" fill="#7b7b7b"/>
  <rect x="210" y="435" width="444" height="16" fill="#c6c3c6"/>
  <rect x="210" y="435" width="444" height="1" fill="#ececec"/>
  <rect x="210" y="435" width="1" height="16" fill="#ececec"/>
  <rect x="210" y="450" width="444" height="1" fill="#7b7b7b"/>
  <rect x="653" y="435" width="1" height="16" fill="#7b7b7b"/>
  <rect x="654" y="435" width="22" height="16" fill="#aea8ae"/>
  <rect x="659" y="435" width="1" height="16" fill="#ececec"/>
 </svg>
 <svg width="700" height="500" style="position:absolute;left:0;top:0">
  <path d="M678.5 107 L685 93" stroke="#f4f4f4" stroke-dasharray="1.2 1.2" fill="none"/>
  <path d="M685 93 L691.5 107" stroke="#555" stroke-dasharray="1.2 1.2" fill="none"/>
  <path d="M678.5 418.5 L685 431.5" stroke="#f4f4f4" stroke-dasharray="1.2 1.2" fill="none"/>
  <path d="M691.5 418.5 L685 431.5" stroke="#555" stroke-dasharray="1.2 1.2" fill="none"/>
  <path d="M202.5 436 L188.5 443" stroke="#f4f4f4" stroke-dasharray="1.2 1.2" fill="none"/>
  <path d="M188.5 443 L202.5 450" stroke="#555" stroke-dasharray="1.2 1.2" fill="none"/>
  <path d="M660.5 436 L674 443" stroke="#f4f4f4" stroke-dasharray="1.2 1.2" fill="none"/>
  <path d="M674 443 L660.5 450" stroke="#555" stroke-dasharray="1.2 1.2" fill="none"/>
 </svg>
 <div class="txt" style="left:17px;top:436px;letter-spacing:0.65px">(43200,-5700)</div>
 <div class="txt" style="left:128px;top:436px">34.81%</div>
 <!-- bottom toolbar -->
 <div class="a" style="left:12px;top:459px;width:113px;height:27px;border:1px solid;border-color:#ececec #7b7b7b #7b7b7b #ececec"></div>
 <div class="txt" style="left:15px;top:465px">VHDL</div>
 <div class="a" style="left:360px;top:459px;width:66px;height:27px;border:1px solid;border-color:#ececec #7b7b7b #7b7b7b #ececec"></div>
 <div class="txt" style="left:363px;top:465px">ns</div>
 <div class="a" style="left:295px;top:458px;width:58px;height:30px;border:2px solid;border-color:#6b6b6b #ececec #ececec #6b6b6b"></div>
 <div class="txt" style="left:303px;top:465px">100</div>
 <div class="txt" style="left:510px;top:465px">t=</div>
 <div class="txt" style="left:530px;top:465px;letter-spacing:0.68px">0.093,753,124,999</div>
 <svg width="700" height="500" style="position:absolute;left:0;top:0">
  <g transform="translate(-301,0)">
   <rect x="411" y="465" width="10" height="1" fill="#f2f2f2"/><rect x="411" y="465" width="1" height="2" fill="#f2f2f2"/>
   <rect x="412" y="468" width="1" height="1" fill="#f2f2f2"/><rect x="413" y="470" width="1" height="1" fill="#f2f2f2"/><rect x="414" y="472" width="1" height="1" fill="#f2f2f2"/>
   <rect x="420" y="466" width="1" height="1" fill="#555"/><rect x="419" y="468" width="1" height="1" fill="#555"/><rect x="418" y="470" width="1" height="1" fill="#555"/><rect x="416" y="472" width="2" height="1" fill="#555"/>
   <rect x="410" y="476" width="12" height="1" fill="#f2f2f2"/><rect x="410" y="476" width="1" height="3" fill="#f2f2f2"/>
   <rect x="411" y="478" width="11" height="1" fill="#555"/><rect x="421" y="476" width="1" height="3" fill="#555"/>
  </g>
  <g transform="translate(0,0)">
   <rect x="411" y="465" width="10" height="1" fill="#f2f2f2"/><rect x="411" y="465" width="1" height="2" fill="#f2f2f2"/>
   <rect x="412" y="468" width="1" height="1" fill="#f2f2f2"/><rect x="413" y="470" width="1" height="1" fill="#f2f2f2"/><rect x="414" y="472" width="1" height="1" fill="#f2f2f2"/>
   <rect x="420" y="466" width="1" height="1" fill="#555"/><rect x="419" y="468" width="1" height="1" fill="#555"/><rect x="418" y="470" width="1" height="1" fill="#555"/><rect x="416" y="472" width="2" height="1" fill="#555"/>
   <rect x="410" y="476" width="12" height="1" fill="#f2f2f2"/><rect x="410" y="476" width="1" height="3" fill="#f2f2f2"/>
   <rect x="411" y="478" width="11" height="1" fill="#555"/><rect x="421" y="476" width="1" height="3" fill="#555"/>
  </g>
  <circle cx="148.5" cy="467.5" r="2.6" fill="#000"/>
  <rect x="145" y="471" width="5" height="1.6" fill="#000"/>
  <rect x="147.5" y="471" width="2.6" height="10" fill="#000"/>
  <rect x="144" y="479" width="9" height="2" fill="#000"/>
  <rect x="170" y="466" width="2.5" height="14" fill="#000"/>
  <path d="M172 473 L179 466 L179 480 Z M179 473 L186 466 L186 480 Z" fill="#000"/>
  <rect x="202" y="466" width="4" height="14" fill="#9c9c9c"/>
  <rect x="207.5" y="466" width="4" height="14" fill="#9c9c9c"/>
  <path d="M230 466 L237.5 473 L230 480 Z M237 466 L244.5 473 L237 480 Z" fill="#000"/>
  <path d="M274 466 L281.5 473 L274 480 Z" fill="#000"/>
  <path d="M299 466.5 H303 M299 480.5 H303" stroke="#000" stroke-dasharray="1 1"/><path d="M301.5 466 V481" stroke="#000" stroke-dasharray="1 1"/>
  <circle cx="453.5" cy="473.5" r="6.5" fill="#7b7b7b"/>
  <circle cx="468.5" cy="473.5" r="6.7" fill="#ffff00"/>
  <circle cx="483.5" cy="473.5" r="6.5" fill="#7b7b7b"/>
 </svg>
</div>
</body></html>
